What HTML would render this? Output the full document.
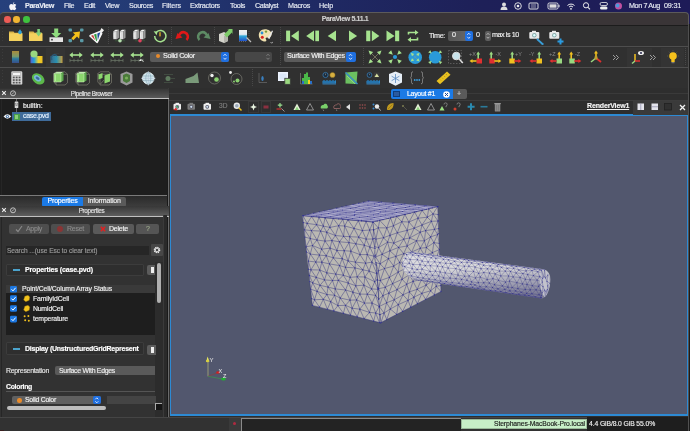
<!DOCTYPE html>
<html><head><meta charset="utf-8">
<style>
*{margin:0;padding:0;box-sizing:border-box}
html,body{width:690px;height:431px;overflow:hidden;background:#2e2e2e;font-family:"Liberation Sans",sans-serif;position:relative}
.a{position:absolute}
div.a,div.mt{-webkit-text-stroke:0.15px currentColor;will-change:transform}
.mt{position:absolute;top:1px;font-size:7.2px;line-height:10px;color:#e8ecf4;white-space:nowrap}
</style></head><body>
<!-- menubar -->
<div class="a" style="left:0;top:0;width:690px;height:26px;background:linear-gradient(90deg,#26407c 0%,#233a74 20%,#1f2a64 45%,#1e2058 70%,#1e1b58 100%)"></div>
<svg class="a" style="left:8.5px;top:2px" width="8" height="9" viewBox="0 0 8 9"><path d="M5.3 0.3c0.1 0.8-0.5 1.6-1.3 1.7-0.1-0.8 0.5-1.6 1.3-1.7zM7.3 6.3c-0.4 0.9-1 1.9-1.8 1.9-0.7 0-0.9-0.4-1.7-0.4s-1 0.4-1.7 0.4C1.3 8.2 0.2 6.3 0.2 4.6c0-1.6 1-2.5 2-2.5 0.7 0 1.2 0.4 1.6 0.4s1-0.5 1.8-0.4c0.3 0 1.2 0.1 1.7 0.9-1.4 0.9-1.2 2.8 0 3.3z" fill="#f4f4f8"/></svg>
<div class="mt" style="left:25px;font-weight:bold;letter-spacing:-0.36px">ParaView</div>
<div class="mt" style="left:64px;letter-spacing:-0.40px">File</div>
<div class="mt" style="left:84px;letter-spacing:-0.35px">Edit</div>
<div class="mt" style="left:105px;letter-spacing:-0.36px">View</div>
<div class="mt" style="left:129px;letter-spacing:-0.33px">Sources</div>
<div class="mt" style="left:162px;letter-spacing:-0.08px">Filters</div>
<div class="mt" style="left:190px;letter-spacing:-0.24px">Extractors</div>
<div class="mt" style="left:230px;letter-spacing:-0.36px">Tools</div>
<div class="mt" style="left:255px;letter-spacing:-0.37px">Catalyst</div>
<div class="mt" style="left:288px;letter-spacing:-0.26px">Macros</div>
<div class="mt" style="left:319px;letter-spacing:-0.20px">Help</div>
<svg class="a" style="left:498px;top:1px" width="125" height="10" viewBox="0 0 125 10">
 <circle cx="6" cy="3.5" r="2" fill="#ddd"/><path d="M2.5 9c0-2.5 1.5-3.5 3.5-3.5s3.5 1 3.5 3.5z" fill="#ddd"/>
 <circle cx="20" cy="5" r="3.3" fill="none" stroke="#eee" stroke-width="0.9"/><circle cx="20" cy="5" r="1.3" fill="#eee"/>
 <rect x="31" y="2" width="9" height="6" rx="1" fill="none" stroke="#eee" stroke-width="0.9"/><path d="M33 4h5M33 6h5" stroke="#eee" stroke-width="0.6"/>
 <rect x="50" y="2" width="10" height="6" rx="1.3" fill="none" stroke="#eee" stroke-width="0.9"/><rect x="51.5" y="3.3" width="7" height="3.4" fill="#ddd"/><rect x="60.5" y="3.8" width="1" height="2.4" fill="#eee"/>
 <path d="M69.5 4.5a5 5 0 0 1 7 0M71 6a2.8 2.8 0 0 1 4 0" fill="none" stroke="#f0f0f0" stroke-width="1"/><circle cx="73" cy="7.8" r="0.9" fill="#f0f0f0"/>
 <circle cx="88" cy="4.3" r="2.6" fill="none" stroke="#eee" stroke-width="1"/><path d="M90 6.3l2 2" stroke="#eee" stroke-width="1.1"/>
 <rect x="102" y="1.5" width="7.5" height="3" rx="1.5" fill="none" stroke="#eee" stroke-width="0.8"/><rect x="102" y="5.5" width="7.5" height="3" rx="1.5" fill="#eee"/>
 <circle cx="120.5" cy="5" r="3.5" fill="#c050a0"/><circle cx="119.5" cy="4.5" r="2" fill="#40a0e0" opacity="0.9"/>
</svg>
<div class="mt" style="left:629px;letter-spacing:-0.38px">Mon 7 Aug</div>
<div class="mt" style="left:664px;letter-spacing:-0.20px">09:31</div>

<!-- title bar -->
<div class="a" style="left:0;top:12px;width:689px;height:13px;background:#3a3537;border-top:1px solid #5c5a5b;border-right:1px solid #5c5a5b;border-radius:4px 4px 0 0"></div>
<div class="a" style="left:3.5px;top:15.5px;width:6.5px;height:6.5px;border-radius:50%;background:#ee5c56"></div>
<div class="a" style="left:13px;top:15.5px;width:6.5px;height:6.5px;border-radius:50%;background:#f2b532"></div>
<div class="a" style="left:22.5px;top:15.5px;width:6.5px;height:6.5px;border-radius:50%;background:#3fc23f"></div>
<div class="a" style="left:0;top:13.5px;width:690px;text-align:center;font-size:7px;line-height:10px;color:#d0d0d0;font-weight:bold;letter-spacing:-0.36px">ParaView 5.11.1</div>
<div class="a" style="left:0;top:25px;width:690px;height:1px;background:#1c1c1c"></div>

<!-- toolbars -->
<div class="a" style="left:0;top:26px;width:690px;height:62px;background:#303030"></div>
<div class="a" style="left:0;top:45.5px;width:690px;height:1px;background:#4e4e4e"></div>
<div class="a" style="left:0;top:66.5px;width:690px;height:1px;background:#4e4e4e"></div>
<div class="a" style="left:0;top:88px;width:690px;height:1px;background:#3a3a3a"></div>


<!-- left panel -->
<div class="a" style="left:0;top:88px;width:168px;height:329px;background:#323232"></div>
<div class="a" style="left:0;top:88.5px;width:168.5px;height:9.5px;background:linear-gradient(#383838,#4a4a4a 50%,#5e5e5e)"></div>
<div class="a" style="left:0;top:98px;width:168.5px;height:1px;background:#c0c0c0"></div>
<svg class="a" style="left:1px;top:90px" width="16" height="7" viewBox="0 0 16 7"><path d="M1.2 1.2l3.6 3.6M4.8 1.2L1.2 4.8" stroke="#eee" stroke-width="1.1"/><circle cx="12" cy="3.3" r="2.5" fill="none" stroke="#ddd" stroke-width="0.8"/><path d="M11 4.3l2-2" stroke="#ddd" stroke-width="0.7"/></svg>
<div class="a" style="left:0;top:89.5px;width:183px;text-align:center;font-size:6.3px;line-height:8px;color:#e4e4e4;letter-spacing:-0.37px">Pipeline Browser</div>
<div class="a" style="left:0;top:99px;width:167px;height:96px;background:#1e1e1e"></div>
<div class="a" style="left:167px;top:99px;width:1px;height:318px;background:#1a1a1a"></div>
<div class="a" style="left:0.5px;top:99px;width:1px;height:318px;background:#262626"></div>
<div class="a" style="left:168px;top:99px;width:1px;height:318px;background:#6a6a6a"></div>
<!-- pipeline items -->
<svg class="a" style="left:13px;top:99px" width="8" height="22" viewBox="0 0 8 22"><path d="M3.5 0v2.5M3.5 9v4" stroke="#bbb" stroke-width="0.5"/><rect x="1.7" y="2.5" width="3.6" height="6.5" rx="0.6" fill="#d8d8d8"/><path d="M2.7 4v1.6M4.3 4v1.6M2.5 6.3h2" stroke="#333" stroke-width="0.5"/></svg>
<div class="a" style="left:22.5px;top:101px;font-size:7px;line-height:9px;color:#f0f0f0;letter-spacing:-0.09px">builtin:</div>
<div class="a" style="left:12px;top:112px;width:39px;height:8.7px;background:#3f6b9a"></div>
<svg class="a" style="left:2.5px;top:113px" width="9" height="7" viewBox="0 0 9 7"><path d="M0.5 3.5Q4.3-0.8 8.3 3.5Q4.3 7.8 0.5 3.5z" fill="#f4f4f4"/><circle cx="4.4" cy="3.5" r="1.6" fill="#3a6aa0"/><circle cx="4.4" cy="3.5" r="0.7" fill="#fff"/></svg>
<div class="a" style="left:13.5px;top:113.5px;width:6px;height:5.5px;background:#4aa04a"></div>
<div class="a" style="left:15px;top:114.5px;width:3px;height:3.5px;background:#8ad07a"></div>
<div class="a" style="left:22.5px;top:111.3px;font-size:7px;line-height:9px;color:#e6f2ff;letter-spacing:-0.32px">case.pvd</div>

<!-- tabs -->
<div class="a" style="left:0;top:195px;width:167px;height:1px;background:#7a7a7a"></div>
<div class="a" style="left:0;top:196px;width:167px;height:10px;background:linear-gradient(#2a2a2a,#3c3c3c)"></div>
<div class="a" style="left:42px;top:196.5px;width:41px;height:9.5px;background:#1b7ae6;border-radius:2px 0 0 2px"></div>
<div class="a" style="left:42px;top:196.3px;width:41px;text-align:center;font-size:7px;line-height:10px;color:#fff;letter-spacing:-0.2px">Properties</div>
<div class="a" style="left:83px;top:196.5px;width:42.5px;height:9.5px;background:#5a5a5a;border-radius:0 2px 2px 0"></div>
<div class="a" style="left:83px;top:196.3px;width:42.5px;text-align:center;font-size:7px;line-height:10px;color:#eee;letter-spacing:-0.18px">Information</div>
<div class="a" style="left:0;top:206px;width:168.5px;height:9.5px;background:linear-gradient(#383838,#4a4a4a 50%,#5e5e5e)"></div>
<div class="a" style="left:0;top:215.5px;width:168.5px;height:1px;background:#c0c0c0"></div>
<svg class="a" style="left:1px;top:207px" width="16" height="7" viewBox="0 0 16 7"><path d="M1.2 1.2l3.6 3.6M4.8 1.2L1.2 4.8" stroke="#eee" stroke-width="1.1"/><circle cx="12" cy="3.3" r="2.5" fill="none" stroke="#ddd" stroke-width="0.8"/><path d="M11 4.3l2-2" stroke="#ddd" stroke-width="0.7"/></svg>
<div class="a" style="left:0;top:206.5px;width:183px;text-align:center;font-size:6.3px;line-height:8px;color:#e4e4e4;letter-spacing:-0.3px">Properties</div>

<!-- buttons -->
<div class="a" style="left:9px;top:224.3px;width:39.5px;height:9.5px;background:#4e4e4e;border-radius:2px"></div>
<svg class="a" style="left:15px;top:225px" width="8" height="8" viewBox="0 0 8 8"><path d="M1 4.5l2 2 4-5.5" fill="none" stroke="#888" stroke-width="1.2"/></svg>
<div class="a" style="left:26px;top:224.3px;font-size:7px;line-height:10px;color:#8a8a8a;letter-spacing:-0.30px">Apply</div>
<div class="a" style="left:51px;top:224.3px;width:39px;height:9.5px;background:#4e4e4e;border-radius:2px"></div>
<div class="a" style="left:57px;top:226px;width:6px;height:6px;border-radius:50%;background:#8a3434"></div>
<div class="a" style="left:67px;top:224.3px;font-size:7px;line-height:10px;color:#8a8a8a;letter-spacing:-0.26px">Reset</div>
<div class="a" style="left:93px;top:224.3px;width:40.5px;height:9.5px;background:#5a5a5a;border-radius:2px"></div>
<svg class="a" style="left:99.5px;top:226px" width="6" height="6" viewBox="0 0 6 6"><path d="M0.8 0.8l4.4 4.4M5.2 0.8L0.8 5.2" stroke="#e02020" stroke-width="1.5"/></svg>
<div class="a" style="left:109px;top:224.3px;font-size:7px;line-height:10px;color:#f4f4f4;letter-spacing:-0.21px">Delete</div>
<div class="a" style="left:136px;top:224.3px;width:23px;height:9.5px;background:#555;border-radius:2px"></div>
<div class="a" style="left:145.5px;top:224.3px;font-size:7px;line-height:10px;color:#9aa88a">?</div>

<!-- search -->
<div class="a" style="left:6px;top:246px;width:143px;height:8.5px;background:#262626"></div>
<div class="a" style="left:7px;top:245.5px;font-size:6.6px;line-height:9px;color:#9a9a9a;letter-spacing:-0.05px">Search ...(use Esc to clear text)</div>
<div class="a" style="left:150.5px;top:244.3px;width:12px;height:12px;background:#474747;border-radius:1px"></div>
<svg class="a" style="left:152.5px;top:246.3px" width="8" height="8" viewBox="0 0 8 8"><circle cx="4" cy="4" r="2.5" fill="none" stroke="#eee" stroke-width="1.6" stroke-dasharray="1.2 0.76"/><circle cx="4" cy="4" r="1.9" fill="none" stroke="#eee" stroke-width="0.9"/></svg>

<!-- properties group -->
<div class="a" style="left:6px;top:264px;width:138px;height:11.5px;background:#2e2e2e;border:1px solid #3c3c3c;border-radius:1px"></div>
<div class="a" style="left:12.5px;top:269.3px;width:6.5px;height:1.5px;background:#4ba3cc"></div>
<div class="a" style="left:24.5px;top:265px;font-size:7px;line-height:10px;color:#fff;font-weight:bold;letter-spacing:-0.16px">Properties (case.pvd)</div>
<div class="a" style="left:146.5px;top:265px;width:9px;height:10px;background:#5c5c5c;border-radius:2px 0 0 2px"></div>
<div class="a" style="left:150.5px;top:267px;width:3px;height:6px;background:#eee"></div>
<div class="a" style="left:155px;top:262px;width:8px;height:155px;background:#2c2c2c"></div>
<div class="a" style="left:157px;top:262.5px;width:4px;height:40px;background:#b0b0b0;border-radius:2px"></div>
<div class="a" style="left:163px;top:215px;width:1px;height:202px;background:#3a3a3a"></div>
<div class="a" style="left:164px;top:215px;width:3px;height:202px;background:#2a2a2a"></div>

<!-- list -->
<div class="a" style="left:6px;top:284.5px;width:149px;height:8.5px;background:#3a3a3a"></div>
<div class="a" style="left:6px;top:293px;width:149px;height:42px;background:#1e1e1e"></div>
<div class="a" style="left:22px;top:283.8px;font-size:6.9px;line-height:10px;color:#f0f0f0;letter-spacing:-0.15px">Point/Cell/Column Array Status</div>
<svg class="a" style="left:9.5px;top:285.5px" width="8" height="38" viewBox="0 0 8 38">
<g fill="#1d78e2"><rect x="0" y="0" width="7" height="6.6" rx="1.3"/><rect x="0" y="9.3" width="7" height="6.6" rx="1.3"/><rect x="0" y="19.2" width="7" height="6.6" rx="1.3"/><rect x="0" y="29.8" width="7" height="6.6" rx="1.3"/></g>
<g fill="none" stroke="#fff" stroke-width="1"><path d="M1.5 3.3l1.5 1.6 2.6-3.1"/><path d="M1.5 12.6l1.5 1.6 2.6-3.1"/><path d="M1.5 22.5l1.5 1.6 2.6-3.1"/><path d="M1.5 33.1l1.5 1.6 2.6-3.1"/></g>
</svg>
<svg class="a" style="left:23px;top:294.5px" width="8" height="28" viewBox="0 0 8 28">
<path d="M1.8 1.2L5 0.3 6.8 2 6.2 5.3 2.8 6.7 0.6 5z" fill="#f2c31c" stroke="#8a6a10" stroke-width="0.4"/>
<path d="M1.8 11.2L5 10.3 6.8 12 6.2 15.3 2.8 16.7 0.6 15z" fill="#f2c31c" stroke="#8a6a10" stroke-width="0.4"/>
<g fill="#f0c020"><circle cx="1.6" cy="21.3" r="1"/><circle cx="5.4" cy="21.1" r="1"/><circle cx="2.2" cy="25.3" r="1"/><circle cx="5.8" cy="25.8" r="1"/></g>
</svg>
<div class="a" style="left:33px;top:293.5px;font-size:6.9px;line-height:10px;color:#f0f0f0;letter-spacing:-0.16px">FamilyIdCell</div>
<div class="a" style="left:33px;top:303.5px;font-size:6.9px;line-height:10px;color:#f0f0f0;letter-spacing:-0.24px">NumIdCell</div>
<div class="a" style="left:33px;top:314px;font-size:6.9px;line-height:10px;color:#f0f0f0;letter-spacing:-0.20px">temperature</div>

<!-- display group -->
<div class="a" style="left:6px;top:342px;width:138px;height:12.5px;background:#2e2e2e;border:1px solid #3c3c3c;border-radius:1px"></div>
<div class="a" style="left:12.5px;top:347.5px;width:6.5px;height:1.5px;background:#4ba3cc"></div>
<div class="a" style="left:24.5px;top:343.5px;font-size:7px;line-height:10px;color:#fff;font-weight:bold;letter-spacing:-0.24px">Display (UnstructuredGridRepresent</div>
<div class="a" style="left:146.5px;top:345px;width:9px;height:9.5px;background:#5c5c5c;border-radius:2px 0 0 2px"></div>
<div class="a" style="left:151px;top:347px;width:3px;height:5.5px;background:#eee"></div>
<div class="a" style="left:6px;top:366.3px;font-size:6.9px;line-height:10px;color:#e6e6e6;letter-spacing:-0.27px">Representation</div>
<div class="a" style="left:55px;top:366.3px;width:100px;height:8.5px;background:#5a5a5a;border-radius:2px 0 0 2px"></div>
<div class="a" style="left:59px;top:365.5px;font-size:6.9px;line-height:10px;color:#eee;letter-spacing:-0.27px">Surface With Edges</div>
<div class="a" style="left:6px;top:381.5px;font-size:6.9px;line-height:10px;color:#fff;font-weight:bold;letter-spacing:-0.29px">Coloring</div>
<div class="a" style="left:6px;top:390.5px;width:149px;height:1px;background:#555"></div>
<div class="a" style="left:11.7px;top:396px;width:89px;height:8.3px;background:#606060;border-radius:2px"></div>
<div class="a" style="left:17.3px;top:397.8px;width:4.6px;height:4.6px;border-radius:50%;background:#e88a2a"></div>
<div class="a" style="left:25px;top:395px;font-size:6.9px;line-height:10px;color:#f2f2f2;letter-spacing:-0.25px">Solid Color</div>
<div class="a" style="left:93px;top:396px;width:7.5px;height:8.3px;background:#1f6fe0;border-radius:2px"></div>
<svg class="a" style="left:93px;top:396px" width="8" height="9" viewBox="0 0 8 9"><path d="M2.3 3.3l1.5-1.5 1.5 1.5M2.3 5.3l1.5 1.5 1.5-1.5" fill="none" stroke="#fff" stroke-width="0.8"/></svg>
<div class="a" style="left:106.6px;top:396px;width:48.5px;height:8.3px;background:#444"></div>
<div class="a" style="left:6.8px;top:406px;width:98.5px;height:4.2px;background:#bdbdbd;border-radius:2px"></div>
<div class="a" style="left:155.2px;top:403.4px;width:7.4px;height:7.4px;background:#151515;border-top:1px solid #aaa;border-left:1px solid #aaa"></div>
<div class="a" style="left:0;top:416.5px;width:168px;height:1px;background:#474747"></div>

<!-- right area -->
<div class="a" style="left:169px;top:88px;width:521px;height:329px;background:#2e2e2e"></div>
<div class="a" style="left:169px;top:92.5px;width:521px;height:1px;background:#3a3a3a"></div>
<div class="a" style="left:169px;top:99.5px;width:521px;height:1px;background:#3c3c3c"></div>
<div class="a" style="left:391px;top:89px;width:61.5px;height:9.5px;background:#1b7ae6;border-radius:2px 0 0 2px"></div>
<div class="a" style="left:392.5px;top:90.8px;width:6.5px;height:6px;background:#2a5aa0;border:0.8px solid #0d3d80"></div>
<div class="a" style="left:407px;top:88.8px;font-size:7px;line-height:10px;color:#fff;letter-spacing:-0.31px">Layout #1</div>
<svg class="a" style="left:442.5px;top:90.5px" width="7" height="7" viewBox="0 0 7 7"><circle cx="3.5" cy="3.5" r="3.3" fill="#fff"/><path d="M2 2l3 3M5 2L2 5" stroke="#1b4a9a" stroke-width="1"/></svg>
<div class="a" style="left:452.5px;top:89px;width:13.5px;height:9.5px;background:#5a5a5a;border-radius:0 2px 2px 0"></div>
<div class="a" style="left:457px;top:88.5px;font-size:7px;line-height:10px;color:#ccc">+</div>
<div class="a" style="left:170px;top:114px;width:518px;height:302px;background:#52576e;border-top:2px solid #2d8ad4;border-left:1.5px solid #2d8ad4;border-right:1.5px solid #2d8ad4;border-bottom:2px solid #2d8ad4"></div>

<svg class="a" style="left:9px;top:29px" width="15" height="13" viewBox="0 0 15 13"><path d="M0 2.5h4.5l1 1.3H13V12H0z" fill="#d9b54a"/><rect x="0" y="4.3" width="13.5" height="7.7" fill="#f4d25e"/><path d="M11 0.3l-2 3h4z" fill="#2f9fd6"/><circle cx="11" cy="3.5" r="1.7" fill="#2f9fd6"/></svg>
<svg class="a" style="left:29px;top:29px" width="15" height="13" viewBox="0 0 15 13"><path d="M0 2.5h4.5l1 1.3H13V12H0z" fill="#d9b54a"/><rect x="0" y="4.3" width="13.5" height="7.7" fill="#f4d25e"/><rect x="8.3" y="0" width="2.6" height="4" fill="#7cd07a"/><path d="M6.6 3.6h6l-3 4z" fill="#7cd07a"/></svg>
<svg class="a" style="left:49px;top:28px" width="15" height="15" viewBox="0 0 15 15"><rect x="0.5" y="9.3" width="13.5" height="4.7" fill="#e4e4e4"/><circle cx="3" cy="11.7" r="0.9" fill="#333"/><rect x="5.2" y="0.5" width="4" height="5" fill="#8fdc7e"/><path d="M2.2 5h10l-5 5z" fill="#8fdc7e"/></svg>
<svg class="a" style="left:68px;top:28px" width="16" height="15" viewBox="0 0 16 15"><g fill="#5a9aa6"><rect x="0.5" y="0.5" width="3.5" height="3" rx="1"/><rect x="12" y="0.5" width="3.5" height="3" rx="1"/><rect x="0.5" y="11" width="3.5" height="3.2" rx="1"/><rect x="12" y="11" width="3.5" height="3.2" rx="1"/></g><path d="M12 3.5L4.8 4.5 7 6.6 3.3 10.3 5.3 12.3 9 8.6 11.1 10.7z" fill="#f4c01a"/></svg>
<svg class="a" style="left:88px;top:27px" width="17" height="17" viewBox="0 0 17 17"><path d="M1.2 9.3Q1 7.8 2.5 7.4L12.5 3.6 14.5 6.5 10 15.5Q9.3 16.6 8.3 15.8z" fill="#f6f6f6"/><path d="M12 4l1.5-3 2.5 2.3-2.3 2.6z" fill="#f0f0f0"/><path d="M3 8.8L5.2 8 7.2 13.2z" fill="#c83a3a"/><path d="M6 7.6L8.4 6.7 9 13.8 8.3 14.2z" fill="#2c9a3c"/><path d="M9.3 6.4L12.3 5.2 9.8 13.3z" fill="#1e4a9a"/></svg>
<svg class="a" style="left:113px;top:29px" width="14" height="14" viewBox="0 0 14 14"><path d="M0.3 2.2l2.2-1.5h3.5l-2.2 1.5z" fill="#f4f4f4"/><path d="M0.3 2.2h3.5v8h-3.5z" fill="#dcdcdc"/><path d="M3.8 2.2l2.2-1.5v8l-2.2 1.5z" fill="#9c9c9c"/><path d="M1.1 4v4.5" stroke="#f8f8f8" stroke-width="0.6"/><path d="M6.8 2.2l2.2-1.5h3.5l-2.2 1.5z" fill="#f4f4f4"/><path d="M6.8 2.2h3.5v8h-3.5z" fill="#dcdcdc"/><path d="M10.3 2.2l2.2-1.5v8l-2.2 1.5z" fill="#9c9c9c"/><path d="M7.6 4v4.5" stroke="#f8f8f8" stroke-width="0.6"/><path d="M2 11.8h10" stroke="#3a5a3a" stroke-width="0.8"/><circle cx="7" cy="11.8" r="1.8" fill="#b8e0b0"/></svg>
<svg class="a" style="left:133px;top:29px" width="14" height="14" viewBox="0 0 14 14"><path d="M0.3 2.2l2.2-1.5h3.5l-2.2 1.5z" fill="#f4f4f4"/><path d="M0.3 2.2h3.5v8h-3.5z" fill="#dcdcdc"/><path d="M3.8 2.2l2.2-1.5v8l-2.2 1.5z" fill="#9c9c9c"/><path d="M1.1 4v4.5" stroke="#f8f8f8" stroke-width="0.6"/><path d="M6.8 2.2l2.2-1.5h3.5l-2.2 1.5z" fill="#f4f4f4"/><path d="M6.8 2.2h3.5v8h-3.5z" fill="#dcdcdc"/><path d="M10.3 2.2l2.2-1.5v8l-2.2 1.5z" fill="#9c9c9c"/><path d="M7.6 4v4.5" stroke="#f8f8f8" stroke-width="0.6"/><path d="M2 11.8h10" stroke="#3a5a3a" stroke-width="0.8"/><circle cx="7" cy="11.8" r="1.8" fill="#e04060"/></svg>
<svg class="a" style="left:153px;top:29px" width="14" height="14" viewBox="0 0 14 14"><path d="M3.5 3.0A5.6 5.6 0 1 1 1.7 7" fill="none" stroke="#a6e28f" stroke-width="1.5"/><path d="M0.6 2.2l4 0.4-1 3.6z" fill="#a6e28f"/><rect x="6.4" y="3.2" width="1.2" height="4.2" fill="#f0c020"/></svg>
<svg class="a" style="left:175px;top:30px" width="15" height="12" viewBox="0 0 15 12"><path d="M4 7.5A4.5 4.5 0 1 1 11.5 10" fill="none" stroke="#e01818" stroke-width="2.6"/><path d="M0.5 9l2-6 5 4.5z" fill="#e01818"/></svg>
<svg class="a" style="left:196px;top:30px" width="15" height="12" viewBox="0 0 15 12"><path d="M11 7.5A4.5 4.5 0 1 0 3.5 10" fill="none" stroke="#5d8a64" stroke-width="2.6"/><path d="M14.5 9l-2-6-5 4.5z" fill="#5d8a64"/></svg>
<svg class="a" style="left:218px;top:28px" width="15" height="16" viewBox="0 0 15 16"><path d="M1 6l5-2 4 2v7l-4 2-5-2z" fill="#d4d4cc"/><path d="M6 8l4-2v7l-4 2z" fill="#b4b4ac"/><path d="M6 6.5l5-5-2-0.5h5.5v5.5l-0.6-2-5 5z" fill="#7ecb6a"/></svg>
<svg class="a" style="left:238px;top:29px" width="15" height="14" viewBox="0 0 15 14"><defs><linearGradient id="cmg" x1="0" y1="0" x2="0" y2="1"><stop offset="0" stop-color="#f0f0f0"/><stop offset="0.4" stop-color="#e0e8f0"/><stop offset="0.55" stop-color="#30a8d8"/><stop offset="1" stop-color="#2050c8"/></linearGradient></defs><rect x="1" y="1" width="8" height="11" fill="url(#cmg)"/><path d="M1 12.5h8" stroke="#888" stroke-width="0.6" stroke-dasharray="1 1"/><path d="M8.5 8.5l4.5 4.5" stroke="#bbb" stroke-width="1.3"/><path d="M11 2v8" stroke="#666" stroke-width="0.6" stroke-dasharray="1 1"/></svg>
<svg class="a" style="left:258px;top:28px" width="16" height="16" viewBox="0 0 16 16"><path d="M7 1.2C3 1.2 0.8 4 0.8 7.3c0 3.6 3 6.3 6.3 6.3 1.6 0 1.5-1.5 0.8-2.3-0.7-0.8 0-1.8 1-1.8h1.5c2 0 3.2-1.3 3.2-3.2C13.6 3.4 10.8 1.2 7 1.2z" fill="#f0e2b0"/><circle cx="4" cy="5" r="1.4" fill="#2a8fd8"/><circle cx="8" cy="3.6" r="1.2" fill="#7a9a3a"/><circle cx="4.3" cy="9.3" r="1.5" fill="#d82020"/><path d="M9.5 10l4.5-7.5 1 0.5-3.5 8z" fill="#e8e8e8"/><path d="M12.5 14l1.2 1.2 1.2-1.2" fill="none" stroke="#ccc" stroke-width="0.8"/></svg>
<svg class="a" style="left:285px;top:30px" width="135" height="12" viewBox="0 0 135 12"><g fill="#a6e28f"><rect x="1.1" y="0.6" width="4" height="10.6"/><path d="M6 5.9L13.8 0.6V11.2z"/><path d="M21.2 5.9L29 0.6V11.2z"/><rect x="30.3" y="0.6" width="3.7" height="10.6"/><path d="M42.7 5.9L51 0.6V11.2z"/><path d="M64 0.6L72.1 5.9 64 11.2z"/><rect x="81.2" y="0.6" width="4.1" height="10.6"/><path d="M86.8 0.6L94.4 5.9 86.8 11.2z"/><path d="M101.5 0.6L109.6 5.9 101.5 11.2z"/><rect x="110.1" y="0.6" width="4.1" height="10.6"/></g><g fill="none" stroke="#a6e28f" stroke-width="1.6"><path d="M123.5 4.5V2.5h8"/><path d="M132.5 7.5v2.2h-8"/></g><path d="M130 0l3.5 2.5-3.5 2.5z" fill="#a6e28f"/><path d="M126 7l-3.5 2.7 3.5 2.5z" fill="#a6e28f"/></svg>
<div class="a" style="left:429.3px;top:30.5px;font-size:7.2px;line-height:9.2px;color:#f0f0f0;white-space:nowrap;letter-spacing:-0.34px">Time:</div>
<div class="a" style="left:448px;top:30.5px;width:24px;height:9.5px;border-radius:2px;background:linear-gradient(90deg,#565656,#6a6a6a);"></div>
<div class="a" style="left:451.5px;top:30.2px;font-size:7.2px;line-height:9.2px;color:#f0f0f0;white-space:nowrap;">0</div>
<div class="a" style="left:464.5px;top:30.5px;width:7.5px;height:9.5px;border-radius:2px;background:#1f6fe0"></div>
<svg class="a" style="left:464.5px;top:30.5px" width="8" height="10" viewBox="0 0 8 10"><path d="M2.3 3.8l1.5-1.6 1.5 1.6M2.3 5.8l1.5 1.6 1.5-1.6" fill="none" stroke="#fff" stroke-width="0.8"/></svg>
<div class="a" style="left:476.3px;top:30.2px;font-size:7.2px;line-height:9.2px;color:#f0f0f0;white-space:nowrap;">0</div>
<div class="a" style="left:485px;top:30.5px;width:6px;height:9.5px;border-radius:2px;background:#5e5e5e"></div>
<svg class="a" style="left:485px;top:30.5px" width="6" height="10" viewBox="0 0 6 10"><path d="M1.6 3.8l1.4-1.5 1.4 1.5M1.6 5.8l1.4 1.5 1.4-1.5" fill="none" stroke="#ddd" stroke-width="0.7"/></svg>
<div class="a" style="left:492.3px;top:30.2px;font-size:7.2px;line-height:9.2px;color:#f0f0f0;white-space:nowrap;letter-spacing:-0.44px">max is 10</div>
<svg class="a" style="left:528.5px;top:29.5px" width="16" height="16" viewBox="0 0 16 16"><rect x="0.3" y="2" width="10" height="6.8" rx="1" fill="#e8e8e8"/><rect x="3" y="0.8" width="4" height="2" fill="#e8e8e8"/><circle cx="5.3" cy="5.3" r="2.2" fill="#8aa"/><circle cx="5.3" cy="5.3" r="1.2" fill="#dff"/><path d="M8 9l5.5 5" stroke="#3a9ed8" stroke-width="1.8"/><circle cx="13.7" cy="14" r="1" fill="#3a9ed8"/></svg>
<svg class="a" style="left:549px;top:29.5px" width="16" height="16" viewBox="0 0 16 16"><rect x="0.3" y="2" width="10" height="6.8" rx="1" fill="#e8e8e8"/><rect x="3" y="0.8" width="4" height="2" fill="#e8e8e8"/><circle cx="5.3" cy="5.3" r="2.2" fill="#8aa"/><circle cx="5.3" cy="5.3" r="1.2" fill="#dff"/><path d="M11.5 8.5v6M8.5 11.5h6" stroke="#2a9be0" stroke-width="2"/></svg>
<svg class="a" style="left:12px;top:50.5px" width="8" height="13" viewBox="0 0 8 13"><defs><linearGradient id="cb1" x1="0" y1="0" x2="0" y2="1"><stop offset="0" stop-color="#a88a3a"/><stop offset="0.45" stop-color="#7a9a6a"/><stop offset="0.65" stop-color="#2a7aa0"/><stop offset="1" stop-color="#3a4e8a"/></linearGradient></defs><rect x="0" y="0" width="7" height="12" fill="url(#cb1)"/></svg>
<svg class="a" style="left:29.5px;top:49.5px" width="13" height="14" viewBox="0 0 13 14"><defs><linearGradient id="cb2" x1="0" y1="0" x2="1" y2="0"><stop offset="0" stop-color="#5a60c8"/><stop offset="0.3" stop-color="#20a0e0"/><stop offset="0.65" stop-color="#e8d030"/><stop offset="1" stop-color="#f0c020"/></linearGradient></defs><rect x="0.5" y="6" width="12" height="7.2" fill="url(#cb2)"/><circle cx="4" cy="4" r="3.6" fill="#9ad880"/></svg>
<div class="a" style="left:46px;top:47.5px;width:19px;height:19px;background:#343434"></div>
<svg class="a" style="left:49.5px;top:50px" width="13" height="14" viewBox="0 0 13 14"><defs><linearGradient id="cb3" x1="0" y1="0" x2="1" y2="0"><stop offset="0" stop-color="#3a6a8a"/><stop offset="0.5" stop-color="#2a90b0"/><stop offset="1" stop-color="#c8a040"/></linearGradient></defs><rect x="0.5" y="6" width="12" height="7" fill="url(#cb3)"/><path d="M2 10a3 3 0 0 1 5-4" fill="none" stroke="#2a5a7a" stroke-width="1.5"/><path d="M4 3.5h5" stroke="#3a3a3a" stroke-width="1"/></svg>
<svg class="a" style="left:69.3px;top:51.5px" width="15" height="12" viewBox="0 0 15 12"><path d="M2.5 3h9" stroke="#a6e28f" stroke-width="1.6"/><path d="M0.3 3l3.5-2.7v5.4zM13.7 3l-3.5-2.7v5.4z" fill="#a6e28f"/><path d="M1 8.5h12M1 6.8v3.4M5 6.8v3.4M9 6.8v3.4M13 6.8v3.4" stroke="#6e7a6a" stroke-width="0.7"/></svg>
<svg class="a" style="left:89.6px;top:51.5px" width="15" height="12" viewBox="0 0 15 12"><path d="M2.5 3h9" stroke="#a6e28f" stroke-width="1.6"/><path d="M0.3 3l3.5-2.7v5.4zM13.7 3l-3.5-2.7v5.4z" fill="#a6e28f"/><path d="M1 8.5h12M1 6.8v3.4M5 6.8v3.4M9 6.8v3.4M13 6.8v3.4" stroke="#6e7a6a" stroke-width="0.7"/></svg>
<svg class="a" style="left:110px;top:51.5px" width="15" height="12" viewBox="0 0 15 12"><path d="M2.5 3h9" stroke="#a6e28f" stroke-width="1.6"/><path d="M0.3 3l3.5-2.7v5.4zM13.7 3l-3.5-2.7v5.4z" fill="#a6e28f"/><path d="M1 8.5h12M1 6.8v3.4M5 6.8v3.4M9 6.8v3.4M13 6.8v3.4" stroke="#6e7a6a" stroke-width="0.7"/></svg>
<svg class="a" style="left:129.7px;top:51.5px" width="15" height="12" viewBox="0 0 15 12"><path d="M2.5 3h9" stroke="#a6e28f" stroke-width="1.6"/><path d="M0.3 3l3.5-2.7v5.4zM13.7 3l-3.5-2.7v5.4z" fill="#a6e28f"/><path d="M1 8.5h12M1 6.8v3.4M5 6.8v3.4M9 6.8v3.4M13 6.8v3.4" stroke="#6e7a6a" stroke-width="0.7"/></svg>
<svg class="a" style="left:138px;top:57px" width="6" height="6" viewBox="0 0 6 6"><path d="M1 4l2-2.5 0.5 2.5z" fill="#f0f0f0"/><path d="M3.5 2l2 3" stroke="#ddd" stroke-width="0.7"/></svg>
<div class="a" style="left:149.5px;top:51.5px;width:79px;height:9.5px;border-radius:2px;background:#5b5b5b"></div>
<div class="a" style="left:155.7px;top:54px;width:4.2px;height:4.2px;border-radius:50%;background:#e88a2a"></div>
<div class="a" style="left:162.5px;top:51.2px;font-size:7.2px;line-height:9.2px;color:#f2f2f2;white-space:nowrap;letter-spacing:-0.3px">Solid Color</div>
<div class="a" style="left:220.5px;top:51.5px;width:8px;height:9.5px;border-radius:2px;background:#1f6fe0"></div>
<svg class="a" style="left:220.5px;top:51.5px" width="8" height="10" viewBox="0 0 8 10"><path d="M2.5 3.8l1.5-1.6 1.5 1.6M2.5 5.8l1.5 1.6 1.5-1.6" fill="none" stroke="#fff" stroke-width="0.8"/></svg>
<div class="a" style="left:234.5px;top:51.5px;width:37px;height:9.5px;border-radius:2px;background:#474747"></div>
<svg class="a" style="left:264px;top:51.5px" width="8" height="10" viewBox="0 0 8 10"><path d="M2.5 3.8l1.5-1.6 1.5 1.6M2.5 5.8l1.5 1.6 1.5-1.6" fill="none" stroke="#8a8a8a" stroke-width="0.8"/></svg>
<div class="a" style="left:284px;top:51.5px;width:71px;height:9.5px;border-radius:2px;background:#5b5b5b"></div>
<div class="a" style="left:287px;top:51.2px;font-size:7.2px;line-height:9.2px;color:#f2f2f2;white-space:nowrap;letter-spacing:-0.32px">Surface With Edges</div>
<div class="a" style="left:345.5px;top:51.5px;width:9.5px;height:9.5px;border-radius:2px;background:#1f6fe0"></div>
<svg class="a" style="left:346px;top:51.5px" width="9" height="10" viewBox="0 0 9 10"><path d="M3 3.8l1.5-1.6 1.5 1.6M3 5.8l1.5 1.6 1.5-1.6" fill="none" stroke="#fff" stroke-width="0.8"/></svg>
<svg class="a" style="left:368px;top:50px" width="15" height="15" viewBox="0 0 15 15"><path d="M3 3l8 8M11 3l-8 8" stroke="#9a9a7a" stroke-width="0.6"/><path d="M0.5 0.5L5.1 2.11L2.11 5.1z" fill="#a6e28f"/><path d="M13.5 0.5L8.9 2.11L11.89 5.1z" fill="#a6e28f"/><path d="M0.5 13.5L5.1 11.89L2.11 8.9z" fill="#a6e28f"/><path d="M13.5 13.5L8.9 11.89L11.89 8.9z" fill="#a6e28f"/></svg>
<svg class="a" style="left:388px;top:50px" width="15" height="15" viewBox="0 0 15 15"><path d="M4.8 4.8L0.20000000000000018 3.19L3.19 0.20000000000000018z" fill="#a6e28f"/><path d="M9.2 4.8L13.799999999999999 3.19L10.809999999999999 0.20000000000000018z" fill="#a6e28f"/><path d="M4.8 9.2L0.20000000000000018 10.809999999999999L3.19 13.799999999999999z" fill="#a6e28f"/><path d="M9.2 9.2L13.799999999999999 10.809999999999999L10.809999999999999 13.799999999999999z" fill="#a6e28f"/><circle cx="7" cy="7" r="2.1" fill="#2a9ad8"/></svg>
<svg class="a" style="left:408px;top:49.5px" width="15" height="15" viewBox="0 0 15 15"><circle cx="7.2" cy="7.2" r="6.8" fill="#2a9ad8"/><path d="M4 4l6.4 6.4M10.4 4L4 10.4" stroke="#7aa0a0" stroke-width="0.5"/><path d="M2.8 2.8L6.199999999999999 3.9899999999999998L3.9899999999999998 6.199999999999999z" fill="#a6e28f"/><path d="M2.8 11.600000000000001L6.199999999999999 10.410000000000002L3.9899999999999998 8.200000000000001z" fill="#a6e28f"/><path d="M11.600000000000001 2.8L8.200000000000001 3.9899999999999998L10.410000000000002 6.199999999999999z" fill="#a6e28f"/><path d="M11.600000000000001 11.600000000000001L8.200000000000001 10.410000000000002L10.410000000000002 8.200000000000001z" fill="#a6e28f"/></svg>
<svg class="a" style="left:428px;top:49.5px" width="15" height="15" viewBox="0 0 15 15"><circle cx="7.2" cy="7.2" r="6.3" fill="#2a9ad8"/><path d="M3.6 3.6L0.20000000000000018 2.41L2.41 0.20000000000000018z" fill="#a6e28f"/><path d="M10.8 3.6L14.200000000000001 2.41L11.99 0.20000000000000018z" fill="#a6e28f"/><path d="M3.6 10.8L0.20000000000000018 11.99L2.41 14.200000000000001z" fill="#a6e28f"/><path d="M10.8 10.8L14.200000000000001 11.99L11.99 14.200000000000001z" fill="#a6e28f"/></svg>
<svg class="a" style="left:447.5px;top:50px" width="16" height="15" viewBox="0 0 16 15"><rect x="0.5" y="0.5" width="13" height="13" fill="none" stroke="#777" stroke-width="0.6" stroke-dasharray="1.5 1.5"/><circle cx="8.3" cy="6" r="3.8" fill="#c8e4ec" stroke="#ddd" stroke-width="1"/><path d="M11 8.8l3.8 4.2" stroke="#e0e0e0" stroke-width="1.5"/></svg>
<svg class="a" style="left:469px;top:50.5px" width="15" height="14" viewBox="0 0 15 14"><path d="M9.2 3v5" stroke="#9ad880" stroke-width="1.6"/><path d="M7.2 3.5l2-3 2 3z" fill="#9ad880"/><rect x="7.5" y="7.5" width="5.5" height="5" fill="#e03030"/><path d="M7.5 10h-4.5" stroke="#f0c020" stroke-width="1.6"/><path d="M3.5 8l-3 2 3 2z" fill="#f0c020"/><text x="0" y="5.3" font-size="5.5" fill="#8a8a8a" font-family="Liberation Sans">+X</text></svg>
<svg class="a" style="left:489px;top:50.5px" width="15" height="14" viewBox="0 0 15 14"><path d="M2.2 3v5" stroke="#9ad880" stroke-width="1.6"/><path d="M0.19999999999999996 3.5l2-3 2 3z" fill="#9ad880"/><rect x="0.3" y="7.5" width="5.5" height="5" fill="#e03030"/><path d="M5.3 10h4.5" stroke="#f0c020" stroke-width="1.6"/><path d="M9.3 8l3 2-3 2z" fill="#f0c020"/><text x="6.5" y="5.3" font-size="5.5" fill="#8a8a8a" font-family="Liberation Sans">-X</text></svg>
<svg class="a" style="left:509px;top:50.5px" width="15" height="14" viewBox="0 0 15 14"><path d="M3.2 3v5" stroke="#9ad880" stroke-width="1.6"/><path d="M1.2 3.5l2-3 2 3z" fill="#9ad880"/><rect x="0.3" y="7.5" width="5.5" height="5" fill="#f0c020"/><path d="M5.3 10h4.5" stroke="#e03030" stroke-width="1.6"/><path d="M9.3 8l3 2-3 2z" fill="#e03030"/><text x="6" y="5.3" font-size="5.5" fill="#8a8a8a" font-family="Liberation Sans">+Y</text></svg>
<svg class="a" style="left:529px;top:50.5px" width="15" height="14" viewBox="0 0 15 14"><path d="M10.2 3v5" stroke="#9ad880" stroke-width="1.6"/><path d="M8.2 3.5l2-3 2 3z" fill="#9ad880"/><rect x="7.5" y="7.5" width="5.5" height="5" fill="#f0c020"/><path d="M7.5 10h-4.5" stroke="#e03030" stroke-width="1.6"/><path d="M3.5 8l-3 2 3 2z" fill="#e03030"/><text x="0" y="5.3" font-size="5.5" fill="#8a8a8a" font-family="Liberation Sans">-Y</text></svg>
<svg class="a" style="left:549px;top:50.5px" width="15" height="14" viewBox="0 0 15 14"><path d="M10.2 3v5" stroke="#f0c020" stroke-width="1.6"/><path d="M8.2 3.5l2-3 2 3z" fill="#f0c020"/><rect x="7.5" y="7.5" width="5.5" height="5" fill="#9ad880"/><path d="M7.5 10h-4.5" stroke="#e03030" stroke-width="1.6"/><path d="M3.5 8l-3 2 3 2z" fill="#e03030"/><text x="0" y="5.3" font-size="5.5" fill="#8a8a8a" font-family="Liberation Sans">+Z</text></svg>
<svg class="a" style="left:569px;top:50.5px" width="15" height="14" viewBox="0 0 15 14"><path d="M2.2 3v5" stroke="#f0c020" stroke-width="1.6"/><path d="M0.19999999999999996 3.5l2-3 2 3z" fill="#f0c020"/><rect x="0.3" y="7.5" width="5.5" height="5" fill="#9ad880"/><path d="M5.3 10h4.5" stroke="#e03030" stroke-width="1.6"/><path d="M9.3 8l3 2-3 2z" fill="#e03030"/><text x="6" y="5.3" font-size="5.5" fill="#8a8a8a" font-family="Liberation Sans">-Z</text></svg>
<svg class="a" style="left:588px;top:50px" width="16" height="15" viewBox="0 0 16 15"><path d="M8 8V3" stroke="#f0c020" stroke-width="1.6"/><path d="M6 3.5l2-3 2 3z" fill="#f0c020"/><path d="M8 8l-5 4" stroke="#9ad880" stroke-width="1.6"/><path d="M8 8l5 4" stroke="#e03030" stroke-width="1.8"/><rect x="6.5" y="6.5" width="3" height="3" fill="#c0a030"/></svg>
<svg class="a" style="left:612px;top:54px" width="8" height="7" viewBox="0 0 8 7"><path d="M1 1l2.5 2.5L1 6M4 1l2.5 2.5L4 6" fill="none" stroke="#aaa" stroke-width="0.9"/></svg>
<div class="a" style="left:627px;top:47.5px;width:25px;height:19px;background:#343434"></div>
<svg class="a" style="left:631px;top:50px" width="15" height="15" viewBox="0 0 15 15"><path d="M4 11V4" stroke="#f0c020" stroke-width="1.5"/><path d="M4 11l-3 2.5" stroke="#9ad880" stroke-width="1.5"/><path d="M4 11h5" stroke="#e03030" stroke-width="1.5"/><ellipse cx="10" cy="3" rx="3" ry="2" fill="#eee"/><circle cx="10" cy="3" r="1.1" fill="#335"/></svg>
<svg class="a" style="left:649px;top:54px" width="8" height="7" viewBox="0 0 8 7"><path d="M1 1l2.5 2.5L1 6M4 1l2.5 2.5L4 6" fill="none" stroke="#aaa" stroke-width="0.9"/></svg>
<div class="a" style="left:661px;top:47.5px;width:23px;height:19px;background:#343434"></div>
<svg class="a" style="left:666px;top:50px" width="14" height="15" viewBox="0 0 14 15"><circle cx="7" cy="6" r="3.8" fill="#f6c21c"/><rect x="5.3" y="9" width="3.4" height="3" fill="#f6c21c"/><path d="M5.5 12.7h3" stroke="#999" stroke-width="0.8"/><g stroke="#8a8a5a" stroke-width="0.5"><path d="M7 0.3v1M1.2 6h1M11.8 6h1M2.8 1.8l0.7 0.7M11.2 1.8l-0.7 0.7"/></g></svg>
<svg class="a" style="left:10.5px;top:71px" width="12" height="14" viewBox="0 0 12 14"><rect x="0.3" y="0.3" width="11" height="13.3" rx="1.2" fill="#d6d6d6"/><rect x="1.8" y="1.8" width="8" height="2.6" fill="#f4f4f4" stroke="#888" stroke-width="0.4"/><g fill="#555"><rect x="1.8" y="5.6" width="1.9" height="1.7"/><rect x="4.7" y="5.6" width="1.9" height="1.7"/><rect x="7.6" y="5.6" width="1.9" height="1.7"/><rect x="1.8" y="8.2" width="1.9" height="1.7"/><rect x="4.7" y="8.2" width="1.9" height="1.7"/><rect x="7.6" y="8.2" width="1.9" height="1.7"/><rect x="1.8" y="10.8" width="1.9" height="1.7"/><rect x="4.7" y="10.8" width="1.9" height="1.7"/><rect x="7.6" y="10.8" width="1.9" height="1.7"/></g></svg>
<svg class="a" style="left:31px;top:71.5px" width="15" height="14" viewBox="0 0 15 14"><ellipse cx="7.2" cy="6.8" rx="6.8" ry="5" transform="rotate(35 7.2 6.8)" fill="#5cb84a"/><ellipse cx="6.6" cy="6.3" rx="4" ry="2.6" transform="rotate(35 6.6 6.3)" fill="#7ab8d8"/><ellipse cx="6.6" cy="6.3" rx="2.2" ry="1.3" transform="rotate(35 6.6 6.3)" fill="#3a6aa0"/></svg>
<svg class="a" style="left:52.8px;top:71px" width="15" height="15" viewBox="0 0 15 15"><path d="M3 13.5L0.8 11V2.5L3.5 0.8h8.5l2.5 2.5v8.5l-2.5 2.2H3zM14.5 3.3H5.5M3 13.5V5.3L0.8 2.5M3 5.3l2.5-2" fill="none" stroke="#8a8a7a" stroke-width="0.6"/><path d="M1 2.5l2.5-1.5h7l-2.5 1.5z" fill="#c0ecb0"/><path d="M1 2.5h7v8.5h-7z" fill="#8cd66e"/><path d="M8 2.5l2.5-1.5v8.5l-2.5 1.5z" fill="#5aa84a"/><path d="M2.5 3.5v6.5" stroke="#b8f0a0" stroke-width="0.8"/><path d="M1 2.5h7v8.5h-7z" fill="none" stroke="#d0f0c0" stroke-width="0.5"/></svg>
<svg class="a" style="left:75px;top:71px" width="15" height="15" viewBox="0 0 15 15"><path d="M3 13.5L0.8 11V2.5L3.5 0.8h8.5l2.5 2.5v8.5l-2.5 2.2H3zM14.5 3.3H5.5M3 13.5V5.3L0.8 2.5M3 5.3l2.5-2" fill="none" stroke="#8a8a7a" stroke-width="0.6"/><path d="M2 2.5l2.5-1.5h7l-2.5 1.5z" fill="#c0ecb0"/><path d="M2 2.5h7v8.5h-7z" fill="#8cd66e"/><path d="M9 2.5l2.5-1.5v8.5l-2.5 1.5z" fill="#5aa84a"/><path d="M3.5 3.5v6.5" stroke="#b8f0a0" stroke-width="0.8"/><path d="M2 2.5h7v8.5h-7z" fill="none" stroke="#d0f0c0" stroke-width="0.5"/></svg>
<svg class="a" style="left:96.7px;top:71px" width="15" height="15" viewBox="0 0 15 15"><path d="M3 13.5L0.8 11V2.5L3.5 0.8h8.5l2.5 2.5v8.5l-2.5 2.2H3zM14.5 3.3H5.5M3 13.5V5.3L0.8 2.5M3 5.3l2.5-2" fill="none" stroke="#8a8a7a" stroke-width="0.6"/><path d="M1.5 3.5l4-1.5v5l-4 1.5zM7.5 4.5l5.5-2v8l-5.5 2z" fill="#8cd66e"/><path d="M7 9l-3.5 4" stroke="#8a8a7a" stroke-width="0.6"/></svg>
<svg class="a" style="left:120px;top:71px" width="13" height="15" viewBox="0 0 13 15"><path d="M6.5 0.5l6 2.5v8.5l-6 3-6-3V3z" fill="#9a9a9a"/><path d="M3 4l3.5-1.5 3.5 1.5v6l-3.5 2-3.5-2z" fill="#4a7a3a"/><circle cx="6.5" cy="7" r="1.6" fill="#7ab05a"/></svg>
<svg class="a" style="left:140.5px;top:71px" width="15" height="15" viewBox="0 0 15 15"><circle cx="7.3" cy="7.3" r="5.8" fill="#cfe6ee"/><path d="M7.3 0.3v14M0.3 7.3h14" stroke="#bcd" stroke-width="1"/><circle cx="7.3" cy="7.3" r="5.8" fill="none" stroke="#e8f4f8" stroke-width="0.8"/><ellipse cx="7.3" cy="7.3" rx="2.5" ry="5.8" fill="none" stroke="#7a9aa8" stroke-width="0.5"/><path d="M1.5 5h11.6M1.5 9.6h11.6" stroke="#7a9aa8" stroke-width="0.5"/></svg>
<svg class="a" style="left:163px;top:72px" width="13" height="13" viewBox="0 0 13 13"><circle cx="5" cy="6.5" r="2.5" fill="#5e7a5e"/><g fill="none" stroke="#4e5e4e" stroke-width="0.6"><path d="M1 2.5h9M1 10.5h9M8 6.5h4"/></g></svg>
<svg class="a" style="left:185px;top:72px" width="15" height="13" viewBox="0 0 15 13"><path d="M0.5 7l8-3 4-3.5L14 11H0.5z" fill="#7a9a7a"/></svg>
<svg class="a" style="left:207.5px;top:71px" width="14" height="14" viewBox="0 0 14 14"><circle cx="6.5" cy="7" r="6" fill="none" stroke="#8a8a80" stroke-width="0.6"/><circle cx="4" cy="4.5" r="1.7" fill="#f0f0f0"/><circle cx="8.5" cy="8.5" r="2.3" fill="#8ad070"/></svg>
<svg class="a" style="left:228.5px;top:70.5px" width="15" height="15" viewBox="0 0 15 15"><circle cx="7.5" cy="8" r="5.5" fill="none" stroke="#8a8a80" stroke-width="0.6"/><circle cx="1.5" cy="1.5" r="1.4" fill="#f0f0f0"/><circle cx="5" cy="10.5" r="1" fill="#8ad070"/><circle cx="8.5" cy="9.5" r="2" fill="#8ad070"/></svg>
<svg class="a" style="left:257.5px;top:72px" width="10" height="12" viewBox="0 0 10 12"><path d="M1 1v9.5h8" fill="none" stroke="#777" stroke-width="0.6"/><ellipse cx="4.5" cy="6.5" rx="1.2" ry="2.5" fill="#3a80c0"/></svg>
<svg class="a" style="left:278px;top:72px" width="13" height="13" viewBox="0 0 13 13"><rect x="0" y="0" width="10" height="9" fill="#eef4ff"/><rect x="1.5" y="1.5" width="7" height="6" fill="#dce8f8"/><rect x="6.8" y="6.3" width="5.5" height="6" fill="#9ad880" stroke="#3a3a3a" stroke-width="0.8"/></svg>
<svg class="a" style="left:300px;top:71.5px" width="13" height="13" viewBox="0 0 13 13"><path d="M0.5 1v11h12" fill="none" stroke="#999" stroke-width="0.5"/><path d="M2 12V6h2v6zM4 12V2h2v10zM6 12V0.5h2V12zM8 12V5h2v7zM10 12V9h2v3z" fill="#4ab848"/><path d="M2 12V9h2v3zM10 12V9h2v3z" fill="#2a70c8"/><path d="M8 12V8h2v4z" fill="#f0d020"/></svg>
<svg class="a" style="left:322px;top:71px" width="15" height="14" viewBox="0 0 15 14"><circle cx="3.5" cy="4" r="2.6" fill="#1a2a3a" stroke="#3a7ab0" stroke-width="0.8"/><path d="M3.5 2.5v1.7" stroke="#aaa" stroke-width="0.5"/><circle cx="10.5" cy="4" r="2.6" fill="#d8b040" stroke="#8a7020" stroke-width="0.5"/><path d="M0.5 12.5V10l1.5-1 1.5 1 1.5-1 1.5 1 1.5-1 1.5 1 1.5-1 1.5 1 1.5-1V12.5z" fill="#2a86c8"/><path d="M2 9.5v3M4 9.5v3M6 9.5v3M8 9.5v3M10 9.5v3M12 9.5v3" stroke="#1a3a5a" stroke-width="0.5"/><path d="M0.5 13h13.5" stroke="#3a90d0" stroke-width="0.8"/></svg>
<svg class="a" style="left:344.5px;top:71px" width="14" height="14" viewBox="0 0 14 14"><path d="M0.5 1.5l12-1-1 12.5-11-0.5z" fill="#6cc060"/><path d="M0.5 1.5l12 11.5" stroke="#3a8ac8" stroke-width="1.5"/><path d="M2 5l8 8" stroke="#a0e0a0" stroke-width="0.6"/></svg>
<svg class="a" style="left:366px;top:71px" width="15" height="14" viewBox="0 0 15 14"><circle cx="3.5" cy="4" r="2.4" fill="#1a2a3a" stroke="#3a7ab0" stroke-width="0.8"/><path d="M3.5 2.7v1.5" stroke="#aaa" stroke-width="0.5"/><rect x="8" y="1.5" width="5.5" height="5" fill="#3a3a3a"/><path d="M8.5 6l2.3-3.5 2.3 3.5z" fill="#d8e0a0"/><path d="M0.5 12.5V10l1.5-1 1.5 1 1.5-1 1.5 1 1.5-1 1.5 1 1.5-1 1.5 1 1.5-1V12.5z" fill="#2a86c8"/><path d="M2 9.5v3M4 9.5v3M6 9.5v3M8 9.5v3M10 9.5v3M12 9.5v3" stroke="#1a3a5a" stroke-width="0.5"/><path d="M0.5 13h13.5" stroke="#3a90d0" stroke-width="0.8"/></svg>
<svg class="a" style="left:387.5px;top:70.5px" width="15" height="15" viewBox="0 0 15 15"><path d="M7.5 0.5l6.5 2.5v8.5l-6.5 3.3-6.5-3.3V3z" fill="#e6eef6"/><path d="M7.5 3v9M3.6 5.2l7.8 4.5M11.4 5.2l-7.8 4.5" stroke="#5a8ac0" stroke-width="0.8"/></svg>
<svg class="a" style="left:410px;top:71px" width="14" height="14" viewBox="0 0 14 14"><path d="M3 0.8c-1.5 0-1.5 1-1.5 2.5s0 2.7-1 3.5c1 0.8 1 2 1 3.5s0 2.5 1.5 2.5M11 0.8c1.5 0 1.5 1 1.5 2.5s0 2.7 1 3.5c-1 0.8-1 2-1 3.5s0 2.5-1.5 2.5" fill="none" stroke="#aaa" stroke-width="0.7"/><g fill="#3a9ad8"><circle cx="4.7" cy="9" r="0.9"/><circle cx="7" cy="9" r="0.9"/><circle cx="9.3" cy="9" r="0.9"/></g></svg>
<svg class="a" style="left:435.5px;top:71px" width="15" height="14" viewBox="0 0 15 14"><path d="M0.5 10l10.5-9.5 3.5 3.2-10.5 9.5z" fill="#e8c020"/><path d="M4 8.5l1 1M6 6.7l1 1M8 4.9l1 1M10 3.1l1 1" stroke="#8a6a10" stroke-width="0.5"/></svg>
<svg class="a" style="left:173px;top:101.5px" width="9" height="10" viewBox="0 0 9 10"><rect x="0.5" y="1.8" width="7.5" height="6" rx="1" fill="#eeeeee"/><rect x="2.5" y="0.8" width="3.5" height="1.5" fill="#eeeeee"/><circle cx="4.25" cy="4.8" r="1.9" fill="#556"/><circle cx="4.25" cy="4.8" r="1.1" fill="#cde"/><path d="M0.5 8l2.5-2.5 1.5 3z" fill="#e02828"/><circle cx="4.25" cy="4.8" r="1" fill="#3a9a5a"/></svg>
<svg class="a" style="left:187px;top:101.5px" width="9" height="10" viewBox="0 0 9 10"><rect x="0.5" y="1.8" width="7.5" height="6" rx="1" fill="#7a7a7a"/><rect x="2.5" y="0.8" width="3.5" height="1.5" fill="#7a7a7a"/><circle cx="4.25" cy="4.8" r="1.9" fill="#556"/><circle cx="4.25" cy="4.8" r="1.1" fill="#cde"/></svg>
<svg class="a" style="left:202.5px;top:101.5px" width="9" height="10" viewBox="0 0 9 10"><rect x="0.5" y="1.8" width="7.5" height="6" rx="1" fill="#efefef"/><rect x="2.5" y="0.8" width="3.5" height="1.5" fill="#efefef"/><circle cx="4.25" cy="4.8" r="1.9" fill="#556"/><circle cx="4.25" cy="4.8" r="1.1" fill="#cde"/></svg>
<div class="a" style="left:219.3px;top:101.6px;font-size:6.6px;line-height:8.6px;color:#7e7e7e;white-space:nowrap;">3D</div>
<svg class="a" style="left:232.5px;top:101.5px" width="9" height="10" viewBox="0 0 9 10"><circle cx="3.8" cy="3.8" r="3.2" fill="#e8e8e8"/><circle cx="3.8" cy="3.8" r="1.8" fill="#9ab"/><path d="M5.8 5.8l2.7 2.7" stroke="#e8c020" stroke-width="1.4"/></svg>
<svg class="a" style="left:247.5px;top:100.5px" width="11" height="12" viewBox="0 0 11 12"><rect x="0.5" y="0.5" width="10" height="11" fill="none" stroke="#5a5a5a" stroke-width="0.5" stroke-dasharray="1 1"/><path d="M5.5 2.5l1 2.5 2.5 1-2.5 1-1 2.5-1-2.5-2.5-1 2.5-1z" fill="#e8f4e0"/></svg>
<svg class="a" style="left:261px;top:100.5px" width="10" height="12" viewBox="0 0 10 12"><rect x="0.5" y="0.5" width="9" height="11" fill="none" stroke="#5a5a5a" stroke-width="0.5" stroke-dasharray="1 1"/><rect x="2.5" y="4.5" width="5" height="3" fill="#8a3040"/></svg>
<svg class="a" style="left:275.5px;top:101.5px" width="9" height="10" viewBox="0 0 9 10"><path d="M4 1v4.5M1.8 3.2h4.5" stroke="#9ae090" stroke-width="1.2"/><path d="M0.5 7h5" stroke="#d03030" stroke-width="1.2"/><path d="M5.5 6.5l3 3" stroke="#ddd" stroke-width="0.6"/></svg>
<svg class="a" style="left:292.5px;top:101.5px" width="8" height="10" viewBox="0 0 8 10"><path d="M4 1.5l3.5 6.5h-7z" fill="#e6f0d8"/><path d="M4 4.5l2 3.5h-4z" fill="#8ad07a"/></svg>
<svg class="a" style="left:305.5px;top:101.5px" width="8" height="10" viewBox="0 0 8 10"><path d="M4 1.5l3.5 6.5h-7z" fill="none" stroke="#9a9a9a" stroke-width="0.9"/></svg>
<svg class="a" style="left:319.5px;top:101.5px" width="8" height="10" viewBox="0 0 8 10"><path d="M1 6.5c-1-2 0.5-4 2.5-3.5 0.8-2 3.7-1.5 3.8 0.5 1 0.5 0.7 3-0.5 3z" fill="#7ad06a"/><path d="M3 7.5l0.8 1.5" stroke="#bbb" stroke-width="0.5"/></svg>
<svg class="a" style="left:332.5px;top:101.5px" width="8" height="10" viewBox="0 0 8 10"><path d="M1 6.5c-1-2 0.5-4 2.5-3.5 0.8-2 3.7-1.5 3.8 0.5 1 0.5 0.7 3-0.5 3z" fill="none" stroke="#a06a6a" stroke-width="0.8"/><path d="M3.5 7.5l0.3 1.5" stroke="#bbb" stroke-width="0.5"/></svg>
<svg class="a" style="left:345px;top:101.5px" width="7" height="10" viewBox="0 0 7 10"><path d="M1 5l4-3v6z" fill="#e0e0e0"/></svg>
<svg class="a" style="left:357.5px;top:101.5px" width="9" height="10" viewBox="0 0 9 10"><g fill="#a05050"><circle cx="2" cy="3" r="0.8"/><circle cx="4.5" cy="3" r="0.8"/><circle cx="7" cy="3" r="0.8"/><circle cx="2" cy="6" r="0.8"/><circle cx="4.5" cy="6" r="0.8"/><circle cx="7" cy="6" r="0.8"/></g></svg>
<svg class="a" style="left:372px;top:101.5px" width="9" height="10" viewBox="0 0 9 10"><g fill="#3a8ad0"><circle cx="1.5" cy="2.5" r="1"/><circle cx="1.5" cy="6.5" r="1"/></g><circle cx="5" cy="4.5" r="2.2" fill="#e8e8e8"/><path d="M6.5 6l2 2.5" stroke="#ddd" stroke-width="0.9"/></svg>
<svg class="a" style="left:386px;top:101.5px" width="9" height="10" viewBox="0 0 9 10"><path d="M1 8C0.5 4 3 1 7.5 1 8 5 6 8.5 1 8z" fill="#c09a20"/><path d="M1.5 7.5l5-5" stroke="#806010" stroke-width="0.5"/></svg>
<svg class="a" style="left:401px;top:101.5px" width="7" height="10" viewBox="0 0 7 10"><circle cx="2" cy="4" r="1.1" fill="#7a7a50"/><path d="M3 5l3 3" stroke="#6a6a5a" stroke-width="0.6"/></svg>
<svg class="a" style="left:413.5px;top:101.5px" width="8" height="10" viewBox="0 0 8 10"><path d="M4 1.5l3.5 6.5h-7z" fill="#e6f0d8"/><path d="M4 4.5l2 3.5h-4z" fill="#8ad07a"/></svg>
<svg class="a" style="left:426.5px;top:101.5px" width="8" height="10" viewBox="0 0 8 10"><path d="M4 1.5l3.5 6.5h-7z" fill="none" stroke="#9a9a9a" stroke-width="0.9"/></svg>
<svg class="a" style="left:439px;top:101.5px" width="9" height="10" viewBox="0 0 9 10"><path d="M3 4l2.5 4.5h-5z" fill="#9ae080"/><path d="M5 2.5a1.6 1.6 0 1 1 2 1.5v1.2" fill="none" stroke="#999" stroke-width="0.7"/></svg>
<svg class="a" style="left:453px;top:101.5px" width="8" height="10" viewBox="0 0 8 10"><circle cx="2" cy="7" r="1.5" fill="#d04030"/><path d="M4 2.5a1.6 1.6 0 1 1 2 1.5v1.2" fill="none" stroke="#999" stroke-width="0.7"/></svg>
<svg class="a" style="left:466.5px;top:101.5px" width="8" height="10" viewBox="0 0 8 10"><path d="M4 1.2v7M0.6 4.7h7" stroke="#2a8ab0" stroke-width="2"/></svg>
<svg class="a" style="left:480px;top:101.5px" width="8" height="10" viewBox="0 0 8 10"><path d="M0.5 4.7h7" stroke="#2a7a9a" stroke-width="1.6"/></svg>
<svg class="a" style="left:493.5px;top:101.5px" width="7" height="11" viewBox="0 0 7 11"><rect x="0.8" y="2" width="5.5" height="7.5" rx="0.5" fill="#8a8a8a"/><rect x="0.3" y="1" width="6.5" height="1.2" fill="#9a9a9a"/><path d="M2.5 3v5.5M4.5 3v5.5" stroke="#666" stroke-width="0.4"/></svg>
<div class="a" style="left:587px;top:101.3px;font-size:7px;line-height:9px;color:#f4f4f4;white-space:nowrap;font-weight:bold;letter-spacing:-0.15px"><u>RenderView1</u></div>
<div class="a" style="left:633px;top:100.5px;width:55px;height:13.5px;background:#3a3a3a"></div>
<svg class="a" style="left:636.5px;top:103px" width="8" height="8" viewBox="0 0 8 8"><rect x="0.5" y="0.5" width="6.5" height="6.5" fill="#e4e4ec"/><path d="M3.75 0.5v6.5" stroke="#8a8aa8" stroke-width="0.7"/></svg>
<svg class="a" style="left:650.5px;top:103px" width="8" height="8" viewBox="0 0 8 8"><rect x="0.5" y="0.5" width="6.5" height="6.5" fill="#e4e4ec"/><path d="M0.5 3.75h6.5" stroke="#8a8aa8" stroke-width="0.7"/></svg>
<svg class="a" style="left:664px;top:103px" width="9" height="8" viewBox="0 0 9 8"><rect x="0.5" y="0.5" width="7" height="6.5" fill="#303030" stroke="#222" stroke-width="0.8"/></svg>
<svg class="a" style="left:678.5px;top:103.5px" width="7" height="7" viewBox="0 0 7 7"><path d="M1 1l5 5M6 1L1 6" stroke="#f4f4f4" stroke-width="1.3"/></svg>
<div class="a" style="left:107.5px;top:27px;width:1px;height:17px;background:repeating-linear-gradient(#484848 0 1px,transparent 1px 2px)"></div>
<div class="a" style="left:170.5px;top:27px;width:1px;height:17px;background:repeating-linear-gradient(#484848 0 1px,transparent 1px 2px)"></div>
<div class="a" style="left:213.5px;top:27px;width:1px;height:17px;background:repeating-linear-gradient(#484848 0 1px,transparent 1px 2px)"></div>
<div class="a" style="left:279.5px;top:27px;width:1px;height:17px;background:repeating-linear-gradient(#484848 0 1px,transparent 1px 2px)"></div>
<div class="a" style="left:279.5px;top:48px;width:1px;height:17px;background:repeating-linear-gradient(#484848 0 1px,transparent 1px 2px)"></div>
<div class="a" style="left:362.5px;top:48px;width:1px;height:17px;background:repeating-linear-gradient(#484848 0 1px,transparent 1px 2px)"></div>
<div class="a" style="left:684.5px;top:48px;width:1px;height:17px;background:repeating-linear-gradient(#484848 0 1px,transparent 1px 2px)"></div>
<div class="a" style="left:251.5px;top:69px;width:1px;height:17px;background:repeating-linear-gradient(#484848 0 1px,transparent 1px 2px)"></div>
<div class="a" style="left:2px;top:28px;width:1px;height:15px;background:repeating-linear-gradient(#3c3c3c 0 1px,transparent 1px 3px)"></div>
<div class="a" style="left:2px;top:49px;width:1px;height:15px;background:repeating-linear-gradient(#3c3c3c 0 1px,transparent 1px 3px)"></div>
<div class="a" style="left:2px;top:70px;width:1px;height:15px;background:repeating-linear-gradient(#3c3c3c 0 1px,transparent 1px 3px)"></div>
<svg class="a" style="left:195px;top:345px" width="50" height="45" viewBox="0 0 50 45">
<path d="M13 31.3V15" stroke="#b8b87a" stroke-width="0.7"/><path d="M13 31.3L23 27.7" stroke="#8a4040" stroke-width="0.7"/><path d="M13 31.3L27.5 34" stroke="#3a9a4a" stroke-width="0.7"/>
<path d="M11.3 16.5L12.5 11.5 14.5 16.5z" fill="#e8e860"/><ellipse cx="12.5" cy="16" rx="1.6" ry="1.2" fill="#d8d040"/>
<ellipse cx="23" cy="27.5" rx="1.8" ry="1.3" fill="#d02020"/>
<ellipse cx="28.5" cy="34" rx="2.3" ry="1.6" fill="#20b030"/>
<text x="14.5" y="16.5" font-size="6" fill="#f0f0f0" font-family="Liberation Sans">Y</text>
<text x="23.5" y="27.5" font-size="5.5" fill="#f0f0f0" font-family="Liberation Sans">X</text>
<text x="28" y="33" font-size="5.5" fill="#f0f0f0" font-family="Liberation Sans">Z</text>
</svg>

<svg class="a" style="left:0;top:0" width="690" height="431" viewBox="0 0 690 431">
<polygon points="302.5,215.7 373,222 380.5,322.8 312.4,305.4" fill="#bab8b2"/>
<polygon points="373,222 437.8,206.6 441,291.5 380.5,322.8" fill="#bab8b2"/>
<polygon points="302.5,215.7 369,201 437.8,206.6 373,222" fill="#c8c6de"/>
<g><path d="M358.7 237.1L366.1 239.1M320.0 285.3L317.1 291.4M357.2 316.8L364.1 318.6M372.0 303.0L379.3 306.4M363.9 285.1L367.3 294.2M315.8 262.0L319.8 270.0M364.9 277.0L363.9 285.1M326.7 232.2L335.4 235.5M371.6 288.9L375.6 295.4M342.2 258.7L348.1 260.9M329.5 263.9L339.6 265.6M304.6 229.8L304.9 237.1M343.3 275.2L348.2 283.0M355.4 262.1L362.8 269.8M325.0 241.1L330.1 248.1M311.4 230.6L317.0 240.0M317.0 240.0L312.5 245.5M348.1 260.9L355.4 262.1M359.9 294.1L367.3 294.2M310.6 289.1L317.1 291.4M328.0 287.1L334.6 295.3M342.8 219.3L338.7 225.7M350.5 315.1L357.2 316.8M364.9 277.0L371.6 288.9M324.5 279.9L320.0 285.3M360.0 254.6L355.4 262.1M337.9 305.6L333.8 310.9M333.3 257.8L339.6 265.6M344.2 250.7L350.8 251.2M344.7 226.0L343.6 236.3M348.2 283.0L355.8 285.8M379.4 322.5L380.5 322.8M312.5 245.5L310.3 254.1M307.2 223.4L311.4 230.6M309.8 281.5L310.6 289.1M334.6 295.3L330.7 301.7M319.0 217.2L316.6 224.7M376.8 273.7L374.7 281.7M359.8 309.2L364.1 318.6M304.6 229.8L311.4 230.6M329.5 263.9L326.8 272.8M335.8 274.1L332.5 280.5M352.9 292.2L350.0 300.2M337.0 250.5L342.2 258.7M369.7 230.0L366.1 239.1M314.5 299.8L319.5 307.2M372.9 222.0L373.6 229.6M343.4 313.3L350.5 315.1M357.2 276.8L363.9 285.1M367.2 254.6L371.9 262.1M345.5 267.3L343.3 275.2M344.7 226.0L354.0 228.4M309.4 275.5L312.7 282.8M345.5 305.3L352.1 308.2M358.3 220.7L362.4 230.6M333.3 257.8L342.2 258.7M302.9 215.7L307.2 223.4M316.6 224.7L323.3 226.1M319.4 255.1L326.2 255.7M326.9 294.5L323.3 299.3M343.3 275.2L350.1 277.3M329.9 227.4L338.7 225.7M309.8 281.5L312.7 282.8M326.2 255.7L333.3 257.8M378.7 299.1L379.3 306.4M376.8 273.7L376.8 272.7M310.3 238.5L306.1 246.8M317.0 240.0L321.6 249.2M342.2 258.7L339.6 265.6M316.2 277.4L324.5 279.9M340.2 298.0L345.5 305.3M376.2 265.1L376.8 273.7M327.4 309.2L333.8 310.9M333.8 310.9L343.4 313.3M319.4 255.1L315.8 262.0M326.9 294.5L330.7 301.7M350.0 300.2L352.1 308.2M375.7 313.0L373.7 321.1M328.0 287.1L326.9 294.5M314.5 299.8L323.3 299.3M338.3 280.3L348.2 283.0M321.6 249.2L330.1 248.1M364.3 245.2L360.0 254.6M339.6 265.6L343.3 275.2M324.5 279.9L332.5 280.5M355.0 267.9L357.2 276.8M332.5 280.5L338.3 280.3M344.7 226.0L349.7 236.7M326.7 232.2L325.0 241.1M354.0 228.4L358.7 237.1M310.9 269.8L319.8 270.0M306.1 246.8L310.3 254.1M308.4 261.1L308.4 269.2M312.7 282.8L310.6 289.1M312.4 305.4L319.5 307.2M323.3 299.3L330.7 301.7M355.9 243.8L350.8 251.2M335.8 274.1L343.3 275.2M319.8 270.0L326.8 272.8M311.6 216.5L319.0 217.2M367.3 294.2L372.0 303.0M364.3 245.2L367.2 254.6M335.8 274.1L338.3 280.3M329.9 227.4L335.4 235.5M363.9 285.1L359.9 294.1M333.2 218.4L342.8 219.3M348.1 260.9L345.5 267.3M316.2 277.4L312.7 282.8M338.7 225.7L344.7 226.0M350.8 251.2L348.1 260.9M320.6 231.1L317.0 240.0M333.2 218.4L329.9 227.4M339.5 241.8L344.2 250.7M343.6 236.3L349.0 242.6M330.7 301.7L337.9 305.6M332.5 280.5L328.0 287.1M317.1 291.4L326.9 294.5M308.4 261.1L315.8 262.0M345.6 290.0L350.0 300.2M374.7 281.7L371.6 288.9M345.5 305.3L343.4 313.3M366.1 239.1L372.9 239.0M374.1 256.2L376.2 265.1M362.8 269.8L369.1 271.1M335.4 235.5L339.5 241.8M355.8 285.8L363.9 285.1M369.1 271.1L376.8 273.7M330.1 248.1L337.0 250.5M364.1 318.6L373.7 321.1M320.6 231.1L325.0 241.1M343.3 275.2L338.3 280.3M311.6 216.5L307.2 223.4M378.0 289.3L377.9 287.7M367.3 294.2L375.6 295.4M352.1 308.2L357.2 316.8M335.2 288.9L334.6 295.3M371.9 262.1L376.2 265.1M320.0 285.3L326.9 294.5M350.0 300.2L345.5 305.3M355.4 262.1L365.6 263.2M365.6 263.2L371.9 262.1M334.6 295.3L337.9 305.6M350.8 251.2L360.0 254.6M369.7 230.0L373.6 229.6M371.9 262.1L376.8 273.7M326.7 232.2L331.9 240.5M331.9 240.5L330.1 248.1M354.0 228.4L362.4 230.6M364.4 303.1L359.8 309.2M326.2 255.7L329.5 263.9M342.8 219.3L347.9 219.8M347.9 219.8L358.3 220.7M373.6 229.6L372.9 239.0M330.7 301.7L333.8 310.9M360.0 254.6L367.2 254.6M372.0 303.0L369.5 312.4M323.3 299.3L319.5 307.2M358.3 220.7L354.0 228.4M373.7 321.1L379.4 322.5M356.6 299.9L359.8 309.2M355.4 262.1L355.0 267.9M337.0 250.5L344.2 250.7M372.9 222.0L373.0 222.0M338.3 280.3L335.2 288.9M342.2 258.7L345.5 267.3M355.8 285.8L352.9 292.2M369.1 271.1L364.9 277.0M363.9 285.1L371.6 288.9M330.1 248.1L326.2 255.7M315.8 262.0L321.8 262.2M348.1 260.9L355.0 267.9M337.0 250.5L333.3 257.8M372.9 222.0L369.7 230.0M352.1 308.2L359.8 309.2M310.9 269.8L316.2 277.4M366.1 221.4L369.7 230.0M309.4 275.5L309.8 281.5M343.6 236.3L339.5 241.8M350.1 277.3L357.2 276.8M303.3 222.5L307.2 223.4M338.7 225.7L335.4 235.5M306.5 251.9L308.4 261.1M347.9 219.8L344.7 226.0M375.6 295.4L372.0 303.0M310.6 289.1L314.5 299.8M323.3 226.1L329.9 227.4M337.9 305.6L345.5 305.3M316.6 224.7L311.4 230.6M359.9 294.1L356.6 299.9M367.3 294.2L364.4 303.1M315.8 262.0L310.9 269.8M369.9 247.1L367.2 254.6M358.7 237.1L355.9 243.8M337.9 305.6L343.4 313.3M379.3 306.4L379.9 314.5M319.0 217.2L325.1 217.7M312.5 245.5L319.4 255.1M365.6 263.2L362.8 269.8M325.1 217.7L333.2 218.4M366.1 239.1L364.3 245.2M364.4 303.1L369.5 312.4M369.5 312.4L375.7 313.0M367.2 254.6L374.1 256.2M349.7 236.7L355.9 243.8M359.8 309.2L369.5 312.4M326.2 255.7L321.8 262.2M376.8 273.7L377.3 279.5M378.0 289.3L375.6 295.4M379.9 314.5L379.4 322.5M321.8 262.2L319.8 270.0M374.7 281.7L377.3 279.5M339.5 241.8L349.0 242.6M310.3 254.1L308.4 261.1M309.4 275.5L316.2 277.4M372.9 239.0L375.0 248.4M357.2 276.8L364.9 277.0M306.5 251.9L310.3 254.1M302.9 215.7L311.6 216.5M329.5 263.9L335.8 274.1M345.5 267.3L355.0 267.9M369.7 230.0L372.9 239.0M326.8 272.8L335.8 274.1M308.4 261.1L310.9 269.8M372.0 303.0L375.7 313.0M365.6 263.2L369.1 271.1M302.9 215.7L303.3 222.5M343.6 236.3L349.7 236.7M323.3 226.1L326.7 232.2M321.8 262.2L326.8 272.8M325.0 241.1L331.9 240.5M307.2 223.4L304.6 229.8M352.1 308.2L350.5 315.1M359.8 309.2L357.2 316.8M374.1 256.2L375.5 255.2M350.0 300.2L356.6 299.9M335.4 235.5L343.6 236.3M310.3 238.5L317.0 240.0M356.6 299.9L364.4 303.1M348.2 283.0L352.9 292.2M350.1 277.3L348.2 283.0M311.4 230.6L320.6 231.1M369.5 312.4L373.7 321.1M340.2 298.0L337.9 305.6M367.2 254.6L365.6 263.2M331.9 240.5L339.5 241.8M374.1 256.2L371.9 262.1M335.4 235.5L331.9 240.5M317.0 240.0L325.0 241.1M345.6 290.0L352.9 292.2M330.7 301.7L327.4 309.2M331.9 240.5L337.0 250.5M334.6 295.3L340.2 298.0M375.7 313.0L379.4 322.5M345.5 305.3L350.5 315.1M359.9 294.1L364.4 303.1M358.7 237.1L364.3 245.2M350.1 277.3L355.8 285.8M333.3 257.8L329.5 263.9M304.6 229.8L310.3 238.5M312.7 282.8L317.1 291.4M319.4 255.1L321.8 262.2M303.3 222.5L304.6 229.8M344.2 250.7L342.2 258.7M355.9 243.8L360.0 254.6M335.2 288.9L340.2 298.0M317.1 291.4L314.5 299.8M362.4 230.6L369.7 230.0M310.3 238.5L312.5 245.5M356.6 299.9L352.1 308.2M340.2 298.0L350.0 300.2M326.9 294.5L334.6 295.3M319.8 270.0L316.2 277.4M362.8 269.8L357.2 276.8M339.5 241.8L337.0 250.5M320.6 231.1L326.7 232.2M354.0 228.4L349.7 236.7M371.6 288.9L378.0 289.3M314.5 299.8L312.4 305.4M355.0 267.9L362.8 269.8M344.2 250.7L348.1 260.9M358.3 220.7L366.1 221.4M316.2 277.4L320.0 285.3M350.8 251.2L355.4 262.1M366.1 221.4L372.9 222.0M375.7 313.0L379.9 314.5M326.8 272.8L324.5 279.9M323.3 226.1L320.6 231.1M325.1 217.7L323.3 226.1M362.4 230.6L358.7 237.1M310.9 269.8L309.4 275.5M338.3 280.3L345.6 290.0M347.9 219.8L354.0 228.4M319.5 307.2L327.4 309.2M324.5 279.9L328.0 287.1M360.0 254.6L365.6 263.2M332.5 280.5L335.2 288.9M312.7 282.8L320.0 285.3M369.9 247.1L375.0 248.4M369.1 271.1L374.7 281.7M374.7 281.7L378.0 289.3M335.2 288.9L345.6 290.0M310.3 254.1L319.4 255.1M326.8 272.8L332.5 280.5M320.0 285.3L328.0 287.1M369.9 247.1L374.1 256.2M311.6 298.6L314.5 299.8M362.4 230.6L366.1 239.1M328.0 287.1L335.2 288.9M364.9 277.0L374.7 281.7M338.7 225.7L343.6 236.3M321.8 262.2L329.5 263.9M339.6 265.6L345.5 267.3M311.6 298.6L312.4 305.4M352.9 292.2L356.6 299.9M371.6 288.9L367.3 294.2M306.1 246.8L312.5 245.5M311.6 216.5L316.6 224.7M312.5 245.5L321.6 249.2M364.3 245.2L369.9 247.1M355.0 267.9L350.1 277.3M339.6 265.6L335.8 274.1M345.6 290.0L340.2 298.0M321.6 249.2L319.4 255.1M311.4 230.6L310.3 238.5M306.1 246.8L306.5 251.9M349.7 236.7L349.0 242.6M349.0 242.6L355.9 243.8M307.2 223.4L316.6 224.7M316.6 224.7L320.6 231.1M317.1 291.4L323.3 299.3M379.3 306.4L375.7 313.0M323.3 299.3L327.4 309.2M372.9 239.0L369.9 247.1M329.9 227.4L326.7 232.2M362.8 269.8L364.9 277.0M355.8 285.8L359.9 294.1M319.8 270.0L324.5 279.9M310.3 254.1L315.8 262.0M321.6 249.2L326.2 255.7M371.9 262.1L369.1 271.1M348.2 283.0L345.6 290.0M330.1 248.1L333.3 257.8M369.5 312.4L364.1 318.6M366.1 239.1L369.9 247.1M349.0 242.6L344.2 250.7M378.0 289.3L378.7 299.1M319.0 217.2L323.3 226.1M325.1 217.7L329.9 227.4M352.9 292.2L359.9 294.1M308.4 269.2L310.9 269.8M310.6 289.1L311.6 298.6M375.6 295.4L378.7 299.1M304.9 237.1L310.3 238.5M308.4 269.2L309.4 275.5M357.2 276.8L355.8 285.8M349.7 236.7L358.7 237.1M345.5 267.3L350.1 277.3M375.0 248.4L374.1 256.2M342.8 219.3L344.7 226.0M349.0 242.6L350.8 251.2M377.3 279.5L378.0 289.3M379.3 306.4L379.3 307.0M333.2 218.4L338.7 225.7M325.0 241.1L321.6 249.2M375.6 295.4L379.3 306.4M364.4 303.1L372.0 303.0M304.9 237.1L306.1 246.8M372.9 239.0L374.2 238.4M355.9 243.8L364.3 245.2M366.1 221.4L362.4 230.6" stroke="#34347e" stroke-width="0.5" stroke-opacity="0.9" fill="none"/><path d="M302.9 215.7h0M311.6 216.5h0M319.0 217.2h0M325.1 217.7h0M333.2 218.4h0M342.8 219.3h0M347.9 219.8h0M358.3 220.7h0M366.1 221.4h0M372.9 222.0h0M373.0 222.0h0M303.3 222.5h0M307.2 223.4h0M316.6 224.7h0M323.3 226.1h0M329.9 227.4h0M338.7 225.7h0M344.7 226.0h0M354.0 228.4h0M362.4 230.6h0M369.7 230.0h0M373.6 229.6h0M304.6 229.8h0M311.4 230.6h0M320.6 231.1h0M326.7 232.2h0M335.4 235.5h0M343.6 236.3h0M349.7 236.7h0M358.7 237.1h0M366.1 239.1h0M372.9 239.0h0M374.2 238.4h0M304.9 237.1h0M310.3 238.5h0M317.0 240.0h0M325.0 241.1h0M331.9 240.5h0M339.5 241.8h0M349.0 242.6h0M355.9 243.8h0M364.3 245.2h0M369.9 247.1h0M375.0 248.4h0M306.1 246.8h0M312.5 245.5h0M321.6 249.2h0M330.1 248.1h0M337.0 250.5h0M344.2 250.7h0M350.8 251.2h0M360.0 254.6h0M367.2 254.6h0M374.1 256.2h0M375.5 255.2h0M306.5 251.9h0M310.3 254.1h0M319.4 255.1h0M326.2 255.7h0M333.3 257.8h0M342.2 258.7h0M348.1 260.9h0M355.4 262.1h0M365.6 263.2h0M371.9 262.1h0M376.2 265.1h0M308.4 261.1h0M315.8 262.0h0M321.8 262.2h0M329.5 263.9h0M339.6 265.6h0M345.5 267.3h0M355.0 267.9h0M362.8 269.8h0M369.1 271.1h0M376.8 273.7h0M376.8 272.7h0M308.4 269.2h0M310.9 269.8h0M319.8 270.0h0M326.8 272.8h0M335.8 274.1h0M343.3 275.2h0M350.1 277.3h0M357.2 276.8h0M364.9 277.0h0M374.7 281.7h0M377.3 279.5h0M309.4 275.5h0M316.2 277.4h0M324.5 279.9h0M332.5 280.5h0M338.3 280.3h0M348.2 283.0h0M355.8 285.8h0M363.9 285.1h0M371.6 288.9h0M378.0 289.3h0M377.9 287.7h0M309.8 281.5h0M312.7 282.8h0M320.0 285.3h0M328.0 287.1h0M335.2 288.9h0M345.6 290.0h0M352.9 292.2h0M359.9 294.1h0M367.3 294.2h0M375.6 295.4h0M378.7 299.1h0M310.6 289.1h0M317.1 291.4h0M326.9 294.5h0M334.6 295.3h0M340.2 298.0h0M350.0 300.2h0M356.6 299.9h0M364.4 303.1h0M372.0 303.0h0M379.3 306.4h0M379.3 307.0h0M311.6 298.6h0M314.5 299.8h0M323.3 299.3h0M330.7 301.7h0M337.9 305.6h0M345.5 305.3h0M352.1 308.2h0M359.8 309.2h0M369.5 312.4h0M375.7 313.0h0M379.9 314.5h0M312.4 305.4h0M319.5 307.2h0M327.4 309.2h0M333.8 310.9h0M343.4 313.3h0M350.5 315.1h0M357.2 316.8h0M364.1 318.6h0M373.7 321.1h0M379.4 322.5h0M380.5 322.8h0" stroke="#2a2a9a" stroke-width="1.25" stroke-linecap="round" stroke-opacity="0.8" fill="none"/></g>
<g><path d="M431.4 221.3L438.0 221.0M388.9 293.2L386.6 302.8M425.6 299.4L434.4 294.9M440.1 276.2L440.5 278.4M432.3 267.1L436.7 271.7M384.5 268.5L389.4 277.4M436.2 258.1L432.3 267.1M397.3 232.8L407.2 230.3M438.7 264.4L440.2 271.2M411.7 252.0L420.3 248.2M399.6 262.4L406.7 261.5M375.9 239.1L374.8 246.8M413.8 265.1L418.1 270.9M426.4 247.6L432.4 252.6M393.8 243.1L398.6 247.4M383.5 237.7L387.6 242.1M387.6 242.1L382.1 254.3M420.3 248.2L426.4 247.6M429.6 275.1L436.7 271.7M379.3 306.5L386.6 302.8M397.0 289.7L403.0 294.8M414.6 212.1L408.9 222.0M417.4 303.7L425.6 299.4M436.2 258.1L438.7 264.4M392.6 283.6L388.9 293.2M430.6 236.9L426.4 247.6M408.0 300.3L402.6 311.4M403.7 253.7L406.7 261.5M416.6 240.8L424.4 240.8M418.0 218.2L414.2 228.2M418.1 270.9L424.2 269.7M382.1 254.3L380.1 263.8M378.3 227.8L383.5 237.7M403.0 294.8L398.2 304.7M390.5 217.8L386.8 227.9M430.6 290.8L434.4 294.9M375.9 239.1L383.5 237.7M399.6 262.4L398.2 272.0M404.6 268.9L402.1 279.3M421.6 279.3L417.2 289.3M407.1 246.0L411.7 252.0M438.1 214.5L438.0 221.0M384.0 313.0L386.8 319.6M410.7 307.2L417.4 303.7M428.9 259.7L432.3 267.1M437.6 234.5L439.2 243.3M415.8 257.0L413.8 265.1M418.0 218.2L427.3 217.2M378.6 288.7L382.9 295.6M413.9 297.2L421.9 293.3M428.7 208.8L433.0 213.9M403.7 253.7L411.7 252.0M373.0 222.0L378.3 227.8M386.8 227.9L393.4 225.8M388.4 258.7L395.9 256.3M394.2 299.8L390.3 309.0M413.8 265.1L421.2 263.7M401.8 221.7L408.9 222.0M378.7 299.1L382.9 295.6M395.9 256.3L403.7 253.7M378.6 247.5L375.6 257.0M387.6 242.1L389.9 250.8M411.7 252.0L406.7 261.5M385.3 287.3L392.6 283.6M409.4 291.9L413.9 297.2M396.7 314.4L402.6 311.4M402.6 311.4L410.7 307.2M388.4 258.7L384.5 268.5M394.2 299.8L398.2 304.7M417.2 289.3L421.9 293.3M440.8 285.5L441.0 291.5M397.0 289.7L394.2 299.8M384.0 313.0L390.3 309.0M409.6 274.6L418.1 270.9M389.9 250.8L398.6 247.4M434.5 229.3L430.6 236.9M406.7 261.5L413.8 265.1M392.6 283.6L402.1 279.3M424.6 255.7L428.9 259.7M402.1 279.3L409.6 274.6M418.0 218.2L422.0 225.0M397.3 232.8L393.8 243.1M427.3 217.2L431.4 221.3M380.3 280.5L389.4 277.4M375.6 257.0L380.1 263.8M378.2 270.9L377.3 280.1M382.9 295.6L379.3 306.5M381.1 322.5L386.8 319.6M390.3 309.0L398.2 304.7M425.6 230.6L424.4 240.8M404.6 268.9L413.8 265.1M389.4 277.4L398.2 272.0M379.7 220.4L390.5 217.8M436.7 271.7L440.1 276.2M434.5 229.3L437.6 234.5M404.6 268.9L409.6 274.6M401.8 221.7L407.2 230.3M432.3 267.1L429.6 275.1M404.8 214.4L414.6 212.1M420.3 248.2L415.8 257.0M385.3 287.3L382.9 295.6M408.9 222.0L418.0 218.2M424.4 240.8L420.3 248.2M390.0 235.3L387.6 242.1M404.8 214.4L401.8 221.7M409.6 238.0L416.6 240.8M414.2 228.2L420.2 232.2M398.2 304.7L408.0 300.3M402.1 279.3L397.0 289.7M386.6 302.8L394.2 299.8M378.2 270.9L384.5 268.5M413.1 281.4L417.2 289.3M439.7 257.4L438.7 264.4M413.9 297.2L410.7 307.2M438.0 221.0L438.3 220.9M432.4 252.6L439.4 249.6M407.2 230.3L409.6 238.0M424.2 269.7L432.3 267.1M439.4 249.6L439.4 249.6M398.6 247.4L407.1 246.0M434.4 294.9L441.0 291.5M390.0 235.3L393.8 243.1M413.8 265.1L409.6 274.6M379.7 220.4L378.3 227.8M436.7 271.7L440.2 271.2M421.9 293.3L425.6 299.4M406.7 284.2L403.0 294.8M388.9 293.2L394.2 299.8M417.2 289.3L413.9 297.2M426.4 247.6L433.9 242.7M433.9 242.7L439.2 243.3M403.0 294.8L408.0 300.3M424.4 240.8L430.6 236.9M397.3 232.8L403.8 239.1M403.8 239.1L398.6 247.4M427.3 217.2L433.0 213.9M433.5 280.5L430.6 290.8M395.9 256.3L399.6 262.4M414.6 212.1L422.0 210.4M422.0 210.4L428.7 208.8M398.2 304.7L402.6 311.4M430.6 236.9L437.6 234.5M440.1 276.2L436.2 286.3M390.3 309.0L386.8 319.6M428.7 208.8L427.3 217.2M426.1 285.1L430.6 290.8M426.4 247.6L424.6 255.7M407.1 246.0L416.6 240.8M409.6 274.6L406.7 284.2M411.7 252.0L415.8 257.0M424.2 269.7L421.6 279.3M439.4 249.6L436.2 258.1M432.3 267.1L438.7 264.4M398.6 247.4L395.9 256.3M384.5 268.5L393.7 266.1M420.3 248.2L424.6 255.7M407.1 246.0L403.7 253.7M421.9 293.3L430.6 290.8M380.3 280.5L385.3 287.3M437.6 206.7L438.1 214.5M378.6 288.7L378.7 299.1M414.2 228.2L409.6 238.0M421.2 263.7L428.9 259.7M373.6 230.0L378.3 227.8M408.9 222.0L407.2 230.3M376.0 262.7L378.2 270.9M422.0 210.4L418.0 218.2M440.2 271.2L440.1 276.2M379.3 306.5L384.0 313.0M393.4 225.8L401.8 221.7M408.0 300.3L413.9 297.2M386.8 227.9L383.5 237.7M429.6 275.1L426.1 285.1M436.7 271.7L433.5 280.5M384.5 268.5L380.3 280.5M438.6 228.5L437.6 234.5M431.4 221.3L425.6 230.6M408.0 300.3L410.7 307.2M390.5 217.8L396.6 216.4M382.1 254.3L388.4 258.7M433.9 242.7L432.4 252.6M396.6 216.4L404.8 214.4M438.0 221.0L434.5 229.3M433.5 280.5L436.2 286.3M436.2 286.3L440.8 285.5M437.6 234.5L438.8 233.6M422.0 225.0L425.6 230.6M430.6 290.8L436.2 286.3M395.9 256.3L393.7 266.1M393.7 266.1L389.4 277.4M409.6 238.0L420.2 232.2M380.1 263.8L378.2 270.9M378.6 288.7L385.3 287.3M428.9 259.7L436.2 258.1M376.0 262.7L380.1 263.8M373.0 222.0L379.7 220.4M399.6 262.4L404.6 268.9M415.8 257.0L424.6 255.7M440.1 276.2L440.8 285.5M398.2 272.0L404.6 268.9M378.2 270.9L380.3 280.5M433.9 242.7L439.4 249.6M414.2 228.2L422.0 225.0M393.4 225.8L397.3 232.8M393.7 266.1L398.2 272.0M393.8 243.1L403.8 239.1M378.3 227.8L375.9 239.1M421.9 293.3L417.4 303.7M430.6 290.8L425.6 299.4M417.2 289.3L426.1 285.1M407.2 230.3L414.2 228.2M378.6 247.5L387.6 242.1M426.1 285.1L433.5 280.5M418.1 270.9L421.6 279.3M421.2 263.7L418.1 270.9M383.5 237.7L390.0 235.3M436.2 286.3L441.0 291.5M409.4 291.9L408.0 300.3M437.6 234.5L433.9 242.7M403.8 239.1L409.6 238.0M407.2 230.3L403.8 239.1M387.6 242.1L393.8 243.1M413.1 281.4L421.6 279.3M398.2 304.7L396.7 314.4M403.8 239.1L407.1 246.0M403.0 294.8L409.4 291.9M413.9 297.2L417.4 303.7M429.6 275.1L433.5 280.5M431.4 221.3L434.5 229.3M421.2 263.7L424.2 269.7M403.7 253.7L399.6 262.4M375.9 239.1L378.6 247.5M382.9 295.6L386.6 302.8M388.4 258.7L393.7 266.1M373.6 230.0L375.9 239.1M416.6 240.8L411.7 252.0M425.6 230.6L430.6 236.9M406.7 284.2L409.4 291.9M386.6 302.8L384.0 313.0M433.0 213.9L438.1 214.5M378.6 247.5L382.1 254.3M426.1 285.1L421.9 293.3M409.4 291.9L417.2 289.3M394.2 299.8L403.0 294.8M389.4 277.4L385.3 287.3M432.4 252.6L428.9 259.7M409.6 238.0L407.1 246.0M390.0 235.3L397.3 232.8M427.3 217.2L422.0 225.0M438.7 264.4L439.9 263.4M384.0 313.0L381.1 322.5M424.6 255.7L432.4 252.6M416.6 240.8L420.3 248.2M428.7 208.8L437.6 206.7M385.3 287.3L388.9 293.2M424.4 240.8L426.4 247.6M437.6 206.7L437.8 206.6M398.2 272.0L392.6 283.6M393.4 225.8L390.0 235.3M396.6 216.4L393.4 225.8M433.0 213.9L431.4 221.3M380.3 280.5L378.6 288.7M409.6 274.6L413.1 281.4M422.0 210.4L427.3 217.2M386.8 319.6L396.7 314.4M392.6 283.6L397.0 289.7M430.6 236.9L433.9 242.7M402.1 279.3L406.7 284.2M382.9 295.6L388.9 293.2M439.4 249.6L439.7 257.4M406.7 284.2L413.1 281.4M380.1 263.8L388.4 258.7M398.2 272.0L402.1 279.3M388.9 293.2L397.0 289.7M379.9 314.6L384.0 313.0M433.0 213.9L438.0 221.0M397.0 289.7L406.7 284.2M436.2 258.1L439.7 257.4M408.9 222.0L414.2 228.2M393.7 266.1L399.6 262.4M406.7 261.5L415.8 257.0M379.9 314.6L381.1 322.5M421.6 279.3L426.1 285.1M438.7 264.4L436.7 271.7M375.6 257.0L382.1 254.3M379.7 220.4L386.8 227.9M382.1 254.3L389.9 250.8M434.5 229.3L438.6 228.5M424.6 255.7L421.2 263.7M406.7 261.5L404.6 268.9M413.1 281.4L409.4 291.9M389.9 250.8L388.4 258.7M383.5 237.7L378.6 247.5M422.0 225.0L420.2 232.2M420.2 232.2L425.6 230.6M378.3 227.8L386.8 227.9M386.8 227.9L390.0 235.3M386.6 302.8L390.3 309.0M390.3 309.0L396.7 314.4M401.8 221.7L397.3 232.8M432.4 252.6L436.2 258.1M424.2 269.7L429.6 275.1M389.4 277.4L392.6 283.6M380.1 263.8L384.5 268.5M389.9 250.8L395.9 256.3M439.2 243.3L439.4 249.6M418.1 270.9L413.1 281.4M398.6 247.4L403.7 253.7M436.2 286.3L434.4 294.9M438.0 221.0L438.6 228.5M420.2 232.2L416.6 240.8M390.5 217.8L393.4 225.8M396.6 216.4L401.8 221.7M421.6 279.3L429.6 275.1M377.3 280.1L380.3 280.5M374.8 246.8L378.6 247.5M377.3 280.1L378.6 288.7M428.9 259.7L424.2 269.7M422.0 225.0L431.4 221.3M415.8 257.0L421.2 263.7M414.6 212.1L418.0 218.2M420.2 232.2L424.4 240.8M404.8 214.4L408.9 222.0M393.8 243.1L389.9 250.8M433.5 280.5L440.1 276.2M425.6 230.6L434.5 229.3M437.6 206.7L433.0 213.9" stroke="#34347e" stroke-width="0.5" stroke-opacity="0.9" fill="none"/><path d="M373.0 222.0h0M379.7 220.4h0M390.5 217.8h0M396.6 216.4h0M404.8 214.4h0M414.6 212.1h0M422.0 210.4h0M428.7 208.8h0M437.6 206.7h0M437.8 206.6h0M373.6 230.0h0M378.3 227.8h0M386.8 227.9h0M393.4 225.8h0M401.8 221.7h0M408.9 222.0h0M418.0 218.2h0M427.3 217.2h0M433.0 213.9h0M438.1 214.5h0M375.9 239.1h0M383.5 237.7h0M390.0 235.3h0M397.3 232.8h0M407.2 230.3h0M414.2 228.2h0M422.0 225.0h0M431.4 221.3h0M438.0 221.0h0M438.3 220.9h0M374.8 246.8h0M378.6 247.5h0M387.6 242.1h0M393.8 243.1h0M403.8 239.1h0M409.6 238.0h0M420.2 232.2h0M425.6 230.6h0M434.5 229.3h0M438.6 228.5h0M375.6 257.0h0M382.1 254.3h0M389.9 250.8h0M398.6 247.4h0M407.1 246.0h0M416.6 240.8h0M424.4 240.8h0M430.6 236.9h0M437.6 234.5h0M438.8 233.6h0M376.0 262.7h0M380.1 263.8h0M388.4 258.7h0M395.9 256.3h0M403.7 253.7h0M411.7 252.0h0M420.3 248.2h0M426.4 247.6h0M433.9 242.7h0M439.2 243.3h0M378.2 270.9h0M384.5 268.5h0M393.7 266.1h0M399.6 262.4h0M406.7 261.5h0M415.8 257.0h0M424.6 255.7h0M432.4 252.6h0M439.4 249.6h0M377.3 280.1h0M380.3 280.5h0M389.4 277.4h0M398.2 272.0h0M404.6 268.9h0M413.8 265.1h0M421.2 263.7h0M428.9 259.7h0M436.2 258.1h0M439.7 257.4h0M378.6 288.7h0M385.3 287.3h0M392.6 283.6h0M402.1 279.3h0M409.6 274.6h0M418.1 270.9h0M424.2 269.7h0M432.3 267.1h0M438.7 264.4h0M439.9 263.4h0M378.7 299.1h0M382.9 295.6h0M388.9 293.2h0M397.0 289.7h0M406.7 284.2h0M413.1 281.4h0M421.6 279.3h0M429.6 275.1h0M436.7 271.7h0M440.2 271.2h0M379.3 306.5h0M386.6 302.8h0M394.2 299.8h0M403.0 294.8h0M409.4 291.9h0M417.2 289.3h0M426.1 285.1h0M433.5 280.5h0M440.1 276.2h0M440.5 278.4h0M379.9 314.6h0M384.0 313.0h0M390.3 309.0h0M398.2 304.7h0M408.0 300.3h0M413.9 297.2h0M421.9 293.3h0M430.6 290.8h0M436.2 286.3h0M440.8 285.5h0M381.1 322.5h0M386.8 319.6h0M396.7 314.4h0M402.6 311.4h0M410.7 307.2h0M417.4 303.7h0M425.6 299.4h0M434.4 294.9h0M441.0 291.5h0" stroke="#2a2a9a" stroke-width="1.25" stroke-linecap="round" stroke-opacity="0.8" fill="none"/></g>
<g><path d="M374.2 210.7L380.5 212.0M363.3 209.3L369.0 208.0M361.5 221.0L373.0 222.0M418.8 207.8L424.3 206.1M413.1 209.1L426.5 209.3M336.2 208.2L342.5 210.1M409.5 206.3L424.3 206.1M368.0 201.2L369.0 201.0M360.9 212.9L373.5 214.9M337.0 215.2L340.0 214.1M350.4 208.6L356.8 210.4M340.0 214.1L346.0 212.8M405.3 214.3L410.2 213.2M307.9 214.5L313.3 213.3M385.3 215.0L392.2 213.9M378.2 213.8L392.2 213.9M379.8 209.5L394.9 209.8M341.9 207.0L345.9 206.1M328.4 213.6L333.2 212.1M374.5 203.9L385.8 204.1M380.5 212.0L396.4 212.5M426.1 205.6L437.8 206.6M345.9 206.1L352.9 204.6M358.6 203.3L367.9 205.1M321.3 214.8L330.7 216.7M389.0 206.9L405.5 207.5M363.3 202.3L378.9 202.5M388.7 218.3L393.9 217.0M328.4 213.6L337.0 215.2M324.9 217.7L338.5 218.9M333.2 212.1L346.0 212.8M396.4 212.5L410.2 213.2M319.2 212.0L328.4 213.6M354.4 215.7L367.4 216.4M415.5 205.0L424.3 206.1M355.9 207.7L363.3 209.3M324.0 210.9L329.8 209.7M330.7 216.7L346.6 217.2M346.6 217.2L352.5 218.6M392.2 213.9L396.4 212.5M386.6 208.3L394.9 209.8M336.2 208.2L350.4 208.6M392.2 213.9L399.1 215.8M363.3 202.3L374.5 203.9M393.5 205.4L409.5 206.3M363.3 209.3L374.2 210.7M337.7 211.2L342.5 210.1M380.5 212.0L392.2 213.9M385.8 204.1L401.4 204.5M385.7 211.1L402.6 211.5M418.8 207.8L426.5 209.3M358.6 203.3L363.3 202.3M313.3 213.3L319.2 212.0M337.0 215.2L346.6 217.2M324.0 210.9L333.2 212.1M386.6 208.3L389.0 206.9M352.5 218.6L370.9 219.1M409.5 206.3L415.5 205.0M319.2 212.0L324.0 210.9M329.8 209.7L337.7 211.2M369.0 208.0L379.8 209.5M360.9 212.9L378.2 213.8M402.6 211.5L410.2 213.2M354.6 212.0L370.8 211.9M393.5 205.4L401.4 204.5M394.9 209.8L396.7 208.5M356.8 210.4L374.2 210.7M385.7 211.1L396.4 212.5M393.5 205.4L405.5 207.5M374.2 217.6L383.2 219.6M380.8 216.3L393.9 217.0M378.2 213.8L380.5 212.0M361.5 220.3L370.9 219.1M373.0 222.0L377.5 220.9M360.9 212.9L370.8 211.9M361.5 220.3L373.0 222.0M386.6 208.3L396.7 208.5M415.5 205.0L426.1 205.6M342.5 210.1L354.6 212.0M355.9 207.7L369.0 208.0M352.5 218.6L361.5 220.3M375.0 206.4L389.0 206.9M369.0 208.0L375.0 206.4M361.5 221.0L361.5 220.3M396.7 208.5L413.1 209.1M303.1 215.6L307.9 214.5M316.7 216.0L330.7 216.7M337.7 211.2L354.6 212.0M367.9 205.1L379.7 205.2M405.5 207.5L418.8 207.8M383.2 219.6L388.7 218.3M393.9 217.0L399.1 215.8M410.2 213.2L416.7 211.6M346.0 212.8L360.9 212.9M424.3 206.1L426.1 205.6M399.1 215.8L405.3 214.3M416.7 211.6L422.5 210.2M313.3 213.3L321.3 214.8M368.0 201.2L381.6 202.0M359.1 206.2L375.0 206.4M385.8 204.1L392.6 203.2M367.4 216.4L373.5 214.9M337.0 215.2L354.4 215.7M402.6 211.5L416.7 211.6M374.5 203.9L378.9 202.5M348.7 219.8L352.5 218.6M307.9 214.5L321.3 214.8M352.5 218.6L359.4 217.3M379.8 209.5L386.6 208.3M307.9 214.5L316.7 216.0M303.1 215.6L313.1 216.6M324.9 217.7L330.7 216.7M401.4 204.5L409.5 206.3M354.6 212.0L356.8 210.4M328.4 213.6L340.0 214.1M378.9 202.5L385.8 204.1M378.9 202.5L381.6 202.0M392.6 203.2L401.4 204.5M405.5 207.5L413.1 209.1M368.0 201.2L378.9 202.5M359.4 217.3L370.9 219.1M406.2 209.7L413.1 209.1M354.4 215.7L354.7 214.4M379.7 205.2L393.5 205.4M316.7 216.0L324.9 217.7M373.5 214.9L385.3 215.0M359.1 206.2L369.0 208.0M330.7 216.7L341.5 218.2M352.9 204.6L367.9 205.1M348.7 219.8L361.5 221.0M396.4 212.5L402.6 211.5M356.8 210.4L370.8 211.9M402.6 211.5L406.2 209.7M394.9 209.8L406.2 209.7M370.8 211.9L374.2 210.7M426.5 209.3L432.6 207.8M316.7 216.0L321.3 214.8M342.5 210.1L350.4 208.6M359.1 206.2L367.9 205.1M380.5 212.0L385.7 211.1M396.7 208.5L405.5 207.5M406.2 209.7L422.5 210.2M321.3 214.8L337.0 215.2M363.3 202.3L368.0 201.2M385.8 204.1L393.5 205.4M346.0 212.8L354.6 212.0M341.5 218.2L346.6 217.2M340.0 214.1L354.7 214.4M354.7 214.4L367.4 216.4M432.6 207.8L437.8 206.6M350.4 208.6L355.9 207.7M341.9 207.0L355.9 207.7M374.5 203.9L379.7 205.2M330.7 216.7L337.0 215.2M418.8 207.8L432.6 207.8M380.8 216.3L385.3 215.0M375.0 206.4L386.6 208.3M374.2 217.6L388.7 218.3M329.8 209.7L336.2 208.2M394.9 209.8L402.6 211.5M303.1 215.6L316.7 216.0M333.2 212.1L340.0 214.1M401.4 204.5L415.5 205.0M336.2 208.2L341.9 207.0M321.3 214.8L328.4 213.6M413.1 209.1L418.8 207.8M392.6 203.2L405.0 203.9M354.7 214.4L360.9 212.9M396.7 208.5L406.2 209.7M367.9 205.1L375.0 206.4M370.9 219.1L374.2 217.6M361.5 220.3L377.5 220.9M359.4 217.3L374.2 217.6M385.7 211.1L394.9 209.8M406.2 209.7L416.7 211.6M346.0 212.8L354.7 214.4M367.4 216.4L380.8 216.3M341.9 207.0L350.4 208.6M346.6 217.2L354.4 215.7M333.2 212.1L337.7 211.2M381.6 202.0L392.6 203.2M373.5 214.9L378.2 213.8M396.4 212.5L405.3 214.3M352.9 204.6L358.6 203.3M369.0 208.0L386.6 208.3M401.4 204.5L405.0 203.9M389.0 206.9L393.5 205.4M370.8 211.9L378.2 213.8M385.3 215.0L399.1 215.8M374.2 217.6L380.8 216.3M354.7 214.4L373.5 214.9M313.3 213.3L328.4 213.6M405.0 203.9L415.5 205.0M422.5 210.2L426.5 209.3M319.2 212.0L333.2 212.1M341.5 218.2L348.7 219.8M367.4 216.4L374.2 217.6M346.6 217.2L359.4 217.3M377.5 220.9L383.2 219.6M392.2 213.9L405.3 214.3M424.3 206.1L432.6 207.8M363.3 209.3L379.8 209.5M373.5 214.9L380.8 216.3M352.9 204.6L359.1 206.2M385.3 215.0L393.9 217.0M380.8 216.3L388.7 218.3M378.9 202.5L392.6 203.2M324.9 217.7L341.5 218.2M413.1 209.1L422.5 210.2M409.5 206.3L418.8 207.8M370.9 219.1L383.2 219.6M405.5 207.5L409.5 206.3M313.1 216.6L324.9 217.7M370.9 219.1L377.5 220.9M379.7 205.2L389.0 206.9M392.6 203.2L393.9 203.0M338.5 218.9L341.5 218.2M359.4 217.3L367.4 216.4M345.9 206.1L359.1 206.2M378.2 213.8L385.3 215.0M379.8 209.5L385.7 211.1M354.6 212.0L360.9 212.9M356.8 210.4L363.3 209.3M374.2 210.7L385.7 211.1M389.0 206.9L396.7 208.5M329.8 209.7L342.5 210.1M313.1 216.6L316.7 216.0M370.8 211.9L380.5 212.0M337.7 211.2L346.0 212.8M324.0 210.9L337.7 211.2M342.5 210.1L356.8 210.4M354.4 215.7L359.4 217.3M355.9 207.7L359.1 206.2M340.0 214.1L354.4 215.7M350.4 208.6L363.3 209.3M415.5 205.0L414.9 204.7M348.7 219.8L361.5 220.3M341.5 218.2L352.5 218.6M379.7 205.2L385.8 204.1M375.0 206.4L379.7 205.2M338.5 218.9L348.7 219.8M374.2 210.7L379.8 209.5M424.3 206.1L437.8 206.6M345.9 206.1L355.9 207.7M367.9 205.1L374.5 203.9M358.6 203.3L374.5 203.9" stroke="#34347e" stroke-width="0.45" stroke-opacity="0.7" fill="none"/><path d="M303.1 215.6h0M307.9 214.5h0M313.3 213.3h0M319.2 212.0h0M324.0 210.9h0M329.8 209.7h0M336.2 208.2h0M341.9 207.0h0M345.9 206.1h0M352.9 204.6h0M358.6 203.3h0M363.3 202.3h0M368.0 201.2h0M369.0 201.0h0M313.1 216.6h0M316.7 216.0h0M321.3 214.8h0M328.4 213.6h0M333.2 212.1h0M337.7 211.2h0M342.5 210.1h0M350.4 208.6h0M355.9 207.7h0M359.1 206.2h0M367.9 205.1h0M374.5 203.9h0M378.9 202.5h0M381.6 202.0h0M324.9 217.7h0M330.7 216.7h0M337.0 215.2h0M340.0 214.1h0M346.0 212.8h0M354.6 212.0h0M356.8 210.4h0M363.3 209.3h0M369.0 208.0h0M375.0 206.4h0M379.7 205.2h0M385.8 204.1h0M392.6 203.2h0M393.9 203.0h0M338.5 218.9h0M341.5 218.2h0M346.6 217.2h0M354.4 215.7h0M354.7 214.4h0M360.9 212.9h0M370.8 211.9h0M374.2 210.7h0M379.8 209.5h0M386.6 208.3h0M389.0 206.9h0M393.5 205.4h0M401.4 204.5h0M405.0 203.9h0M348.7 219.8h0M352.5 218.6h0M359.4 217.3h0M367.4 216.4h0M373.5 214.9h0M378.2 213.8h0M380.5 212.0h0M385.7 211.1h0M394.9 209.8h0M396.7 208.5h0M405.5 207.5h0M409.5 206.3h0M415.5 205.0h0M414.9 204.7h0M361.5 221.0h0M361.5 220.3h0M370.9 219.1h0M374.2 217.6h0M380.8 216.3h0M385.3 215.0h0M392.2 213.9h0M396.4 212.5h0M402.6 211.5h0M406.2 209.7h0M413.1 209.1h0M418.8 207.8h0M424.3 206.1h0M426.1 205.6h0M373.0 222.0h0M377.5 220.9h0M383.2 219.6h0M388.7 218.3h0M393.9 217.0h0M399.1 215.8h0M405.3 214.3h0M410.2 213.2h0M416.7 211.6h0M422.5 210.2h0M426.5 209.3h0M432.6 207.8h0M437.8 206.6h0" stroke="#2a2a9a" stroke-width="1.0" stroke-linecap="round" stroke-opacity="0.8" fill="none"/></g>
<defs><linearGradient id="cg" x1="0" y1="0" x2="0.12" y2="1"><stop offset="0" stop-color="#dedee2"/><stop offset="0.4" stop-color="#d8d8da"/><stop offset="0.55" stop-color="#c0c0c8"/><stop offset="0.8" stop-color="#9898ac"/><stop offset="1" stop-color="#7a7a96"/></linearGradient><clipPath id="cc"><path d="M402,266 Q402,255 409,251.5 L544,269.2 Q552,272 550,284 Q548,298 541,298.5 L418,280.6 Q404,276 402,266Z"/></clipPath></defs>
<path d="M402,266 Q402,255 409,251.5 L544,269.2 Q552,272 550,284 Q548,298 541,298.5 L418,280.6 Q404,276 402,266Z" fill="url(#cg)"/>
<g clip-path="url(#cc)"><path d="M443.5 259.3L448.5 259.8M532.3 285.7L530.2 289.8M543.3 276.1L542.7 282.2M478.7 273.4L480.2 277.0M464.7 276.3L469.1 275.9M499.6 271.1L495.1 273.9M480.0 286.8L486.2 286.7M526.7 293.4L528.8 295.5M444.4 283.4L447.7 284.9M516.1 273.0L520.1 277.4M409.4 272.3L411.5 275.9M446.3 281.7L444.4 283.4M418.4 255.7L425.0 256.6M483.8 272.5L489.4 273.1M463.0 284.0L466.8 286.5M450.6 284.4L452.7 285.6M430.1 271.5L435.5 271.1M504.8 289.3L509.9 290.9M475.0 267.0L481.0 268.7M516.3 294.9L519.9 295.4M420.6 273.2L426.3 274.6M530.2 289.8L536.1 289.8M531.1 267.5L538.2 268.5M518.8 270.0L526.1 270.9M401.7 253.9L401.8 258.2M537.9 271.8L539.5 276.9M429.0 279.1L432.4 281.8M440.1 272.0L443.7 278.0M417.5 259.7L420.0 264.6M487.6 268.8L483.8 272.5M406.5 254.6L410.1 259.6M410.1 259.6L409.3 263.3M528.8 295.5L532.1 297.2M435.5 271.1L440.1 272.0M461.3 286.3L466.8 286.5M477.9 288.2L474.3 288.8M505.5 282.2L502.4 285.9M440.2 283.8L447.7 284.9M467.2 259.3L464.3 259.5M525.3 266.8L528.1 268.2M534.5 269.1L539.8 269.8M542.7 282.2L538.6 286.3M464.7 276.3L461.5 279.4M460.3 258.4L467.2 259.3M465.5 271.2L473.6 271.4M431.0 254.6L428.1 254.8M478.4 282.7L483.7 282.7M522.4 283.9L527.0 284.4M446.3 281.7L450.6 284.4M471.5 281.9L470.8 284.4M518.9 294.2L519.9 295.4M414.6 279.4L411.6 279.6M466.8 286.5L472.6 287.3M442.5 266.8L440.1 272.0M422.0 269.1L426.3 274.6M430.3 265.7L437.4 266.1M493.3 263.3L497.4 266.1M433.0 255.9L431.2 257.7M432.4 281.8L439.2 282.6M409.3 263.3L404.7 266.5M522.4 283.9L525.3 289.5M470.8 284.4L474.9 284.9M504.1 293.1L509.9 294.0M539.8 269.8L543.6 272.9M525.3 279.3L522.4 283.9M404.7 252.1L406.5 254.6M457.8 259.0L461.6 262.4M538.6 286.3L540.9 290.7M534.5 269.1L532.0 270.5M412.9 252.2L410.7 252.9M521.1 292.3L518.9 294.2M455.9 278.6L452.2 282.7M489.4 273.1L487.2 279.7M478.7 264.0L483.5 265.3M513.1 265.2L511.8 265.9M401.7 253.9L406.5 254.6M516.9 282.7L522.4 283.9M507.1 268.4L513.6 268.2M459.0 283.2L463.0 284.0M420.6 273.2L417.8 277.4M423.0 278.0L421.6 280.3M495.5 290.9L491.9 291.3M530.2 289.8L526.7 293.4M531.1 267.5L528.1 268.2M509.5 281.1L516.9 282.7M536.1 289.8L531.9 293.7M425.3 265.7L430.1 271.5M451.8 258.0L448.5 259.8M454.7 257.6L457.8 259.0M508.6 276.0L505.5 282.2M440.4 281.0L444.4 283.4M509.9 290.9L505.9 292.8M461.3 286.3L459.1 286.5M448.1 268.1L451.5 273.7M538.2 268.5L544.0 269.2M432.4 275.3L429.0 279.1M433.0 255.9L440.3 256.7M511.8 265.9L516.3 266.5M467.1 262.3L464.4 266.3M477.9 288.2L481.6 289.8M505.5 282.2L508.0 287.2M481.0 268.7L483.8 272.5M404.4 278.0L407.7 279.0M481.0 268.7L478.7 273.4M443.6 256.2L445.2 257.2M463.0 284.0L470.8 284.4M422.0 269.1L430.1 271.5M472.6 287.3L474.3 288.8M474.9 284.9L472.6 287.3M527.0 284.4L525.3 289.5M401.0 250.7L404.7 252.1M499.6 271.1L500.8 275.9M513.1 276.9L520.1 277.4M410.7 252.9L415.3 253.4M492.2 269.2L489.4 273.1M412.2 268.7L417.2 269.6M447.5 256.7L445.2 257.2M541.1 297.4L541.1 297.5M429.0 279.1L435.1 279.7M536.1 289.8L539.1 294.8M538.6 286.3L536.1 289.8M525.3 279.3L530.1 279.8M489.3 283.0L492.5 287.5M421.9 254.3L428.1 254.8M508.6 276.0L509.5 281.1M468.9 266.2L475.0 267.0M404.0 278.5L407.7 279.0M494.6 284.7L502.4 285.9M417.2 269.6L422.0 269.1M470.5 288.2L474.3 288.8M455.9 278.6L461.5 279.4M500.8 275.9L508.6 276.0M483.5 265.3L487.6 268.8M405.7 258.6L402.3 263.1M490.2 265.9L492.2 269.2M490.3 262.3L496.2 263.0M410.1 259.6L413.0 264.5M527.7 274.6L533.4 275.6M469.1 275.9L467.0 280.3M489.4 273.1L495.1 273.9M430.1 271.5L426.3 274.6M409.4 278.4L414.6 279.4M519.9 266.1L524.2 267.4M498.2 264.5L505.2 264.8M531.9 293.7L539.1 294.8M528.1 268.2L526.1 270.9M539.1 294.8L541.3 295.4M525.3 289.5L526.7 293.4M474.3 288.8L481.6 289.8M458.0 275.1L455.9 278.6M482.4 262.4L487.0 262.4M512.8 293.7L518.9 294.2M412.2 268.7L409.4 272.3M487.0 262.4L493.3 263.3M471.6 262.9L478.7 264.0M492.9 278.6L498.5 280.3M427.6 281.1L432.4 281.8M413.0 264.5L420.0 264.6M467.0 280.3L470.8 284.4M445.8 263.3L442.5 266.8M533.4 275.6L539.5 276.9M426.3 274.6L429.0 279.1M471.5 281.9L478.4 282.7M475.4 278.0L480.2 277.0M414.6 279.4L421.6 280.3M438.8 276.0L440.4 281.0M421.6 280.3L427.6 281.1M433.0 255.9L435.8 258.2M477.9 260.6L474.7 260.9M532.0 270.5L537.9 271.8M418.4 255.7L417.5 259.7M440.3 256.7L443.5 259.3M493.3 263.3L498.2 264.5M487.2 279.7L483.7 282.7M402.3 263.1L404.7 266.5M405.9 275.0L411.5 275.9M403.3 271.6L403.7 275.8M469.1 275.9L471.5 281.9M485.2 261.6L490.3 262.3M531.9 293.7L528.8 295.5M518.8 270.0L516.1 273.0M505.2 264.8L501.3 267.3M439.9 262.7L437.4 266.1M423.0 278.0L429.0 279.1M487.0 262.4L483.5 265.3M496.2 263.0L493.3 263.3M508.0 287.2L512.1 287.5M541.1 297.4L538.9 298.2M492.9 278.6L489.3 283.0M411.5 275.9L417.8 277.4M512.1 287.5L509.9 290.9M407.9 251.6L412.9 252.2M524.2 267.4L528.1 268.2M500.8 291.4L505.9 292.8M445.8 263.3L448.1 268.1M460.3 258.4L457.8 259.0M539.1 294.8L535.2 296.9M502.4 285.9L504.8 289.3M526.0 296.3L532.1 297.2M502.4 285.9L497.9 288.9M423.0 278.0L427.6 281.1M490.6 290.5L495.5 290.9M421.9 254.3L425.0 256.6M503.4 263.9L507.8 264.5M444.4 283.4L440.2 283.8M473.6 271.4L469.1 275.9M509.9 290.9L512.8 293.7M423.8 253.6L431.0 254.6M487.2 279.7L489.3 283.0M532.3 285.7L536.1 289.8M527.7 274.6L530.1 279.8M524.2 267.4L526.1 270.9M435.5 271.1L432.4 275.3M543.6 272.9L543.3 276.1M464.4 266.3L465.5 271.2M409.4 278.4L407.7 279.0M428.1 254.8L433.0 255.9M437.4 266.1L435.5 271.1M467.1 262.3L468.9 266.2M537.9 271.8L533.4 275.6M487.0 262.4L490.2 265.9M412.7 255.0L410.1 259.6M423.8 253.6L421.9 254.3M495.1 273.9L500.8 275.9M497.9 288.9L504.8 289.3M428.1 261.9L430.3 265.7M431.2 257.7L434.8 261.8M512.1 287.5L515.7 290.9M540.9 290.7L541.8 290.5M517.9 288.6L521.1 292.3M480.2 277.0L483.7 282.7M421.6 280.3L418.5 280.6M492.5 287.5L495.5 290.9M403.3 271.6L409.4 272.3M473.6 271.4L475.4 278.0M452.2 282.7L450.6 284.4M513.6 268.2L516.1 273.0M448.5 259.8L454.5 261.3M477.9 260.6L482.4 262.4M510.6 271.4L508.6 276.0M455.9 268.6L458.0 275.1M459.0 283.2L461.3 286.3M460.1 269.9L464.7 276.3M498.5 280.3L494.6 284.7M443.7 278.0L450.2 278.1M425.0 256.6L428.1 261.9M439.2 282.6L444.4 283.4M450.2 278.1L455.9 278.6M480.2 277.0L478.4 282.7M471.5 259.8L474.7 260.9M544.0 269.2L539.8 269.8M420.0 264.6L425.3 265.7M412.7 255.0L417.5 259.7M505.2 264.8L507.1 268.4M483.5 265.3L481.0 268.7M429.0 279.1L427.6 281.1M464.3 259.5L468.6 260.6M524.9 295.1L519.9 295.4M539.8 269.8L537.9 271.8M407.9 251.6L404.7 252.1M454.3 285.3L461.3 286.3M447.7 284.9L452.7 285.6M542.2 286.3L540.9 290.7M486.2 286.7L492.5 287.5M451.5 273.7L458.0 275.1M490.6 290.5L486.1 290.5M535.2 296.9L538.9 298.2M522.9 273.5L520.1 277.4M526.1 270.9L527.7 274.6M440.1 272.0L445.2 272.9M467.0 280.3L463.0 284.0M445.2 272.9L451.5 273.7M543.9 270.4L543.6 272.9M478.7 264.0L481.0 268.7M510.6 271.4L513.1 276.9M478.7 264.0L475.0 267.0M495.5 290.9L500.8 291.4M530.1 279.8L532.3 285.7M498.5 280.3L502.4 285.9M461.5 279.4L467.0 280.3M437.4 266.1L442.5 266.8M451.8 258.0L457.8 259.0M451.5 273.7L455.9 278.6M467.2 259.3L471.5 259.8M501.3 267.3L505.3 271.1M505.9 292.8L504.1 293.1M501.3 267.3L499.6 271.1M418.4 255.7L422.1 261.1M422.1 261.1L420.0 264.6M440.3 256.7L445.2 257.2M483.7 282.7L489.3 283.0M464.3 259.5L461.6 262.4M417.2 269.6L420.6 273.2M431.0 254.6L437.6 255.4M531.1 267.5L534.5 269.1M518.8 270.0L522.9 273.5M532.1 297.2L538.9 298.2M540.9 290.7L539.1 294.8M437.6 255.4L443.6 256.2M457.8 259.0L454.5 261.3M481.0 268.7L487.6 268.8M490.3 262.3L487.0 262.4M442.5 266.8L448.1 268.1M542.7 282.2L542.2 286.3M443.6 256.2L440.3 256.7M472.6 287.3L470.5 288.2M520.1 277.4L516.9 282.7M440.1 272.0L438.8 276.0M425.3 265.7L430.3 265.7M539.1 294.8L541.1 297.4M454.7 257.6L460.3 258.4M427.6 281.1L425.1 281.6M457.9 265.6L464.4 266.3M430.1 271.5L432.4 275.3M484.2 289.2L486.1 290.5M497.4 266.1L492.2 269.2M486.2 286.7L484.2 289.2M475.0 267.0L473.6 271.4M439.2 282.6L436.0 283.2M450.2 278.1L446.3 281.7M524.9 295.1L528.8 295.5M444.4 283.4L450.6 284.4M505.9 292.8L509.9 294.0M420.0 264.6L417.2 269.6M409.4 272.3L414.2 272.3M435.5 271.1L438.8 276.0M425.3 265.7L422.0 269.1M454.7 257.6L451.8 258.0M516.3 266.5L524.2 267.4M468.6 260.6L471.6 262.9M532.0 270.5L527.7 274.6M405.9 275.0L409.4 278.4M526.7 293.4L524.9 295.1M528.8 295.5L535.2 296.9M500.8 275.9L498.5 280.3M528.1 268.2L534.5 269.1M447.5 256.7L451.8 258.0M404.4 278.0L404.0 278.5M536.1 289.8L540.9 290.7M431.2 257.7L428.1 261.9M516.9 282.7L512.1 287.5M435.1 279.7L440.4 281.0M508.6 276.0L513.1 276.9M401.1 251.6L404.7 252.1M428.1 254.8L425.0 256.6M497.4 266.1L499.6 271.1M461.5 279.4L459.0 283.2M461.6 262.4L467.1 262.3M505.5 282.2L509.5 281.1M516.3 266.5L513.6 268.2M525.3 266.8L524.2 267.4M537.1 280.1L538.6 286.3M402.7 266.1L403.3 271.6M437.6 255.4L433.0 255.9M474.7 260.9L482.4 262.4M505.2 264.8L511.8 265.9M520.1 277.4L525.3 279.3M415.3 253.4L421.9 254.3M410.7 252.9L406.5 254.6M457.9 265.6L460.1 269.9M516.9 282.7L517.9 288.6M492.2 269.2L495.1 273.9M507.8 264.5L505.2 264.8M409.4 272.3L405.9 275.0M463.0 284.0L461.3 286.3M535.2 296.9L532.1 297.2M450.8 263.6L448.1 268.1M516.3 266.5L518.8 270.0M443.5 259.3L439.9 262.7M521.1 292.3L526.7 293.4M412.9 252.2L419.6 253.1M409.3 263.3L412.2 268.7M445.2 272.9L443.7 278.0M419.6 253.1L423.8 253.6M448.5 259.8L445.8 263.3M528.8 295.5L526.0 296.3M483.8 272.5L480.2 277.0M504.8 289.3L505.9 292.8M464.4 266.3L468.9 266.2M528.1 268.2L532.0 270.5M504.8 289.3L500.8 291.4M448.1 268.1L455.9 268.6M435.8 258.2L439.9 262.7M513.1 265.2L519.9 266.1M534.5 269.1L537.9 271.8M417.2 269.6L414.2 272.3M455.9 278.6L459.0 283.2M500.8 275.9L505.5 282.2M454.3 285.3L452.7 285.6M414.2 272.3L411.5 275.9M477.9 288.2L484.2 289.2M521.1 292.3L524.9 295.1M452.2 282.7L459.0 283.2M428.1 261.9L434.8 261.8M404.7 266.5L403.3 271.6M404.4 278.0L409.4 278.4M489.4 273.1L492.9 278.6M525.3 266.8L531.1 267.5M515.7 290.9L521.1 292.3M454.5 261.3L457.9 265.6M470.8 284.4L466.8 286.5M507.8 264.5L511.8 265.9M533.4 275.6L530.1 279.8M440.4 281.0L446.3 281.7M402.7 266.1L404.7 266.5M499.6 271.1L505.3 271.1M486.2 286.7L490.6 290.5M401.0 250.7L407.9 251.6M475.0 267.0L478.7 273.4M420.6 273.2L423.0 278.0M432.4 275.3L438.8 276.0M469.1 275.9L475.4 278.0M530.2 289.8L531.9 293.7M543.6 272.9L543.6 273.3M518.9 294.2L524.9 295.1M467.1 262.3L471.6 262.9M451.8 258.0L454.5 261.3M493.3 263.3L490.2 265.9M403.3 271.6L405.9 275.0M417.8 277.4L423.0 278.0M513.6 268.2L510.6 271.4M489.3 283.0L494.6 284.7M445.2 272.9L450.2 278.1M483.8 272.5L487.2 279.7M461.3 286.3L464.6 287.3M519.9 266.1L525.3 266.8M474.9 284.9L480.0 286.8M401.0 250.7L401.1 251.6M527.0 284.4L532.3 285.7M539.5 276.9L543.3 276.1M431.2 257.7L435.8 258.2M415.3 253.4L418.4 255.7M468.6 260.6L467.1 262.3M468.6 260.6L474.7 260.9M532.0 270.5L533.4 275.6M512.1 287.5L517.9 288.6M471.5 259.8L468.6 260.6M478.7 273.4L483.8 272.5M498.2 264.5L497.4 266.1M414.2 272.3L417.8 277.4M417.5 259.7L422.1 261.1M404.7 252.1L401.7 253.9M482.4 262.4L478.7 264.0M485.2 261.6L487.0 262.4M470.8 284.4L472.6 287.3M541.1 297.4L541.0 298.5M509.9 290.9L515.7 290.9M466.8 286.5L470.5 288.2M459.1 286.5L464.6 287.3M477.9 260.6L485.2 261.6M455.9 268.6L460.1 269.9M522.9 273.5L527.7 274.6M425.0 256.6L431.2 257.7M405.7 258.6L410.1 259.6M537.9 271.8L543.6 272.9M467.0 280.3L471.5 281.9M432.4 281.8L436.0 283.2M478.4 282.7L480.0 286.8M435.1 279.7L432.4 281.8M406.5 254.6L412.7 255.0M464.7 276.3L467.0 280.3M510.6 271.4L516.1 273.0M478.4 282.7L474.9 284.9M519.9 295.4L526.0 296.3M448.1 268.1L445.2 272.9M537.1 280.1L532.3 285.7M458.0 275.1L464.7 276.3M538.9 298.2L541.0 298.5M422.1 261.1L428.1 261.9M455.9 268.6L451.5 273.7M505.9 292.8L512.8 293.7M464.6 287.3L470.5 288.2M498.2 264.5L501.3 267.3M425.0 256.6L422.1 261.1M410.1 259.6L417.5 259.7M538.2 268.5L534.5 269.1M429.6 282.2L436.0 283.2M526.1 270.9L532.0 270.5M422.1 261.1L425.3 265.7M497.9 288.9L500.8 291.4M530.1 279.8L537.1 280.1M472.6 287.3L477.9 288.2M518.9 294.2L516.3 294.9M489.3 283.0L486.2 286.7M443.5 259.3L445.8 263.3M435.1 279.7L439.2 282.6M422.0 269.1L420.6 273.2M494.6 284.7L492.5 287.5M484.2 289.2L481.6 289.8M513.1 276.9L509.5 281.1M401.7 253.9L405.7 258.6M526.1 270.9L522.9 273.5M527.0 284.4L530.2 289.8M539.5 276.9L542.7 282.2M465.5 271.2L464.7 276.3M412.2 268.7L414.2 272.3M401.1 251.6L401.7 253.9M461.6 262.4L457.9 265.6M496.2 263.0L503.4 263.9M505.3 271.1L508.6 276.0M524.9 295.1L526.0 296.3M505.3 271.1L500.8 275.9M490.2 265.9L487.6 268.8M430.3 265.7L430.1 271.5M439.9 262.7L442.5 266.8M538.2 268.5L539.8 269.8M482.4 262.4L483.5 265.3M500.8 291.4L497.8 292.2M445.2 257.2L451.8 258.0M473.6 271.4L478.7 273.4M405.7 258.6L409.3 263.3M532.3 285.7L538.6 286.3M531.9 293.7L535.2 296.9M517.9 288.6L525.3 289.5M460.3 258.4L464.3 259.5M494.6 284.7L497.9 288.9M458.0 275.1L461.5 279.4M465.5 271.2L469.1 275.9M411.5 275.9L409.4 278.4M515.7 290.9L512.8 293.7M443.7 278.0L440.4 281.0M471.5 259.8L477.9 260.6M428.1 261.9L425.3 265.7M412.7 255.0L418.4 255.7M440.3 256.7L435.8 258.2M450.6 284.4L454.3 285.3M525.3 279.3L527.0 284.4M438.8 276.0L443.7 278.0M430.3 265.7L435.5 271.1M443.6 256.2L447.5 256.7M409.4 278.4L411.6 279.6M464.3 259.5L467.1 262.3M437.4 266.1L440.1 272.0M475.4 278.0L471.5 281.9M447.5 256.7L454.7 257.6M497.8 292.2L504.1 293.1M467.2 259.3L468.6 260.6M487.6 268.8L492.2 269.2M417.8 277.4L414.6 279.4M415.3 253.4L412.7 255.0M512.8 293.7L516.3 294.9M419.6 253.1L415.3 253.4M492.5 287.5L497.9 288.9M481.6 289.8L486.1 290.5M445.2 257.2L443.5 259.3M483.7 282.7L486.2 286.7M486.1 290.5L491.9 291.3M497.4 266.1L501.3 267.3M405.9 275.0L404.4 278.0M509.9 294.0L516.3 294.9M427.6 281.1L429.6 282.2M437.6 255.4L440.3 256.7M471.5 281.9L474.9 284.9M541.3 295.4L541.1 297.4M520.1 277.4L522.4 283.9M498.5 280.3L505.5 282.2M522.4 283.9L517.9 288.6M414.6 279.4L418.5 280.6M442.5 266.8L445.2 272.9M537.1 280.1L542.7 282.2M421.6 280.3L425.1 281.6M480.2 277.0L487.2 279.7M492.2 269.2L499.6 271.1M407.7 279.0L411.6 279.6M508.0 287.2L504.8 289.3M501.3 267.3L507.1 268.4M515.7 290.9L518.9 294.2M450.8 263.6L457.9 265.6M450.2 278.1L452.2 282.7M452.2 282.7L454.3 285.3M483.5 265.3L490.2 265.9M535.2 296.9L541.1 297.4M502.4 285.9L508.0 287.2M490.2 265.9L497.4 266.1M507.1 268.4L510.6 271.4M524.2 267.4L518.8 270.0M543.6 272.9L539.5 276.9M464.4 266.3L460.1 269.9M425.1 281.6L429.6 282.2M475.4 278.0L478.4 282.7M404.7 266.5L412.2 268.7M417.8 277.4L421.6 280.3M525.3 289.5L530.2 289.8M544.0 269.2L543.9 270.4M511.8 265.9L507.1 268.4M411.6 279.6L418.5 280.6M450.8 263.6L455.9 268.6M445.2 257.2L448.5 259.8M418.5 280.6L425.1 281.6M519.9 266.1L516.3 266.5M500.8 291.4L504.1 293.1M446.3 281.7L452.2 282.7M428.1 254.8L431.2 257.7M517.9 288.6L515.7 290.9M414.2 272.3L420.6 273.2M426.3 274.6L432.4 275.3M525.3 289.5L521.1 292.3M490.6 290.5L491.9 291.3M495.5 290.9L497.8 292.2M495.1 273.9L492.9 278.6M461.5 279.4L463.0 284.0M497.9 288.9L495.5 290.9M509.5 281.1L512.1 287.5M522.9 273.5L525.3 279.3M450.6 284.4L447.7 284.9M513.1 276.9L516.9 282.7M402.3 263.1L409.3 263.3M407.9 251.6L410.7 252.9M516.1 273.0L513.1 276.9M409.3 263.3L413.0 264.5M445.8 263.3L450.8 263.6M438.8 276.0L435.1 279.7M468.9 266.2L465.5 271.2M426.3 274.6L423.0 278.0M460.1 269.9L458.0 275.1M471.6 262.9L468.9 266.2M480.0 286.8L484.2 289.2M492.9 278.6L494.6 284.7M487.6 268.8L489.4 273.1M539.5 276.9L537.1 280.1M413.0 264.5L412.2 268.7M480.0 286.8L477.9 288.2M461.6 262.4L464.4 266.3M503.4 263.9L498.2 264.5M511.8 265.9L513.6 268.2M406.5 254.6L405.7 258.6M487.2 279.7L492.9 278.6M402.3 263.1L402.7 266.1M435.8 258.2L434.8 261.8M491.9 291.3L497.8 292.2M434.8 261.8L439.9 262.7M507.8 264.5L513.1 265.2M540.9 290.7L541.3 295.4M404.7 252.1L410.7 252.9M490.3 262.3L493.3 263.3M410.7 252.9L412.7 255.0M485.2 261.6L482.4 262.4M478.7 273.4L475.4 278.0M495.1 273.9L498.5 280.3M466.8 286.5L464.6 287.3M454.5 261.3L450.8 263.6M421.9 254.3L418.4 255.7M468.9 266.2L473.6 271.4M443.7 278.0L446.3 281.7M530.1 279.8L527.0 284.4M471.6 262.9L475.0 267.0M526.7 293.4L531.9 293.7M439.2 282.6L440.2 283.8M411.5 275.9L414.6 279.4M404.7 266.5L409.4 272.3M413.0 264.5L417.2 269.6M451.5 273.7L450.2 278.1M432.4 281.8L429.6 282.2M516.1 273.0L522.9 273.5M420.0 264.6L422.0 269.1M474.7 260.9L471.6 262.9M448.5 259.8L450.8 263.6M527.7 274.6L525.3 279.3M434.8 261.8L430.3 265.7M454.3 285.3L459.1 286.5M509.5 281.1L508.0 287.2M412.9 252.2L415.3 253.4M419.6 253.1L421.9 254.3M512.8 293.7L509.9 294.0M483.7 282.7L480.0 286.8M436.0 283.2L440.2 283.8M403.7 275.8L405.9 275.0M513.1 265.2L516.3 266.5M513.6 268.2L518.8 270.0M533.4 275.6L537.1 280.1M542.7 282.2L542.7 281.6M492.5 287.5L490.6 290.5M508.0 287.2L509.9 290.9M460.1 269.9L465.5 271.2M452.7 285.6L459.1 286.5M401.8 258.2L405.7 258.6M403.7 275.8L404.4 278.0M440.4 281.0L439.2 282.6M484.2 289.2L490.6 290.5M474.7 260.9L478.7 264.0M435.8 258.2L443.5 259.3M432.4 275.3L435.1 279.7M507.1 268.4L505.3 271.1M457.9 265.6L455.9 268.6M431.0 254.6L433.0 255.9M503.4 263.9L505.2 264.8M434.8 261.8L437.4 266.1M459.0 283.2L454.3 285.3M423.8 253.6L428.1 254.8M417.5 259.7L413.0 264.5M505.3 271.1L510.6 271.4M496.2 263.0L498.2 264.5M401.8 258.2L402.3 263.1M454.5 261.3L461.6 262.4M439.9 262.7L445.8 263.3M539.8 269.8L543.9 270.4M474.9 284.9L477.9 288.2M457.8 259.0L464.3 259.5M538.6 286.3L542.2 286.3" stroke="#34347e" stroke-width="0.4" stroke-opacity="0.75" fill="none"/><path d="M401.0 250.7h0M407.9 251.6h0M412.9 252.2h0M419.6 253.1h0M423.8 253.6h0M431.0 254.6h0M437.6 255.4h0M443.6 256.2h0M447.5 256.7h0M454.7 257.6h0M460.3 258.4h0M467.2 259.3h0M471.5 259.8h0M477.9 260.6h0M485.2 261.6h0M490.3 262.3h0M496.2 263.0h0M503.4 263.9h0M507.8 264.5h0M513.1 265.2h0M519.9 266.1h0M525.3 266.8h0M531.1 267.5h0M538.2 268.5h0M544.0 269.2h0M401.1 251.6h0M404.7 252.1h0M410.7 252.9h0M415.3 253.4h0M421.9 254.3h0M428.1 254.8h0M433.0 255.9h0M440.3 256.7h0M445.2 257.2h0M451.8 258.0h0M457.8 259.0h0M464.3 259.5h0M468.6 260.6h0M474.7 260.9h0M482.4 262.4h0M487.0 262.4h0M493.3 263.3h0M498.2 264.5h0M505.2 264.8h0M511.8 265.9h0M516.3 266.5h0M524.2 267.4h0M528.1 268.2h0M534.5 269.1h0M539.8 269.8h0M543.9 270.4h0M401.7 253.9h0M406.5 254.6h0M412.7 255.0h0M418.4 255.7h0M425.0 256.6h0M431.2 257.7h0M435.8 258.2h0M443.5 259.3h0M448.5 259.8h0M454.5 261.3h0M461.6 262.4h0M467.1 262.3h0M471.6 262.9h0M478.7 264.0h0M483.5 265.3h0M490.2 265.9h0M497.4 266.1h0M501.3 267.3h0M507.1 268.4h0M513.6 268.2h0M518.8 270.0h0M526.1 270.9h0M532.0 270.5h0M537.9 271.8h0M543.6 272.9h0M543.6 273.3h0M401.8 258.2h0M405.7 258.6h0M410.1 259.6h0M417.5 259.7h0M422.1 261.1h0M428.1 261.9h0M434.8 261.8h0M439.9 262.7h0M445.8 263.3h0M450.8 263.6h0M457.9 265.6h0M464.4 266.3h0M468.9 266.2h0M475.0 267.0h0M481.0 268.7h0M487.6 268.8h0M492.2 269.2h0M499.6 271.1h0M505.3 271.1h0M510.6 271.4h0M516.1 273.0h0M522.9 273.5h0M527.7 274.6h0M533.4 275.6h0M539.5 276.9h0M543.3 276.1h0M402.3 263.1h0M409.3 263.3h0M413.0 264.5h0M420.0 264.6h0M425.3 265.7h0M430.3 265.7h0M437.4 266.1h0M442.5 266.8h0M448.1 268.1h0M455.9 268.6h0M460.1 269.9h0M465.5 271.2h0M473.6 271.4h0M478.7 273.4h0M483.8 272.5h0M489.4 273.1h0M495.1 273.9h0M500.8 275.9h0M508.6 276.0h0M513.1 276.9h0M520.1 277.4h0M525.3 279.3h0M530.1 279.8h0M537.1 280.1h0M542.7 282.2h0M542.7 281.6h0M402.7 266.1h0M404.7 266.5h0M412.2 268.7h0M417.2 269.6h0M422.0 269.1h0M430.1 271.5h0M435.5 271.1h0M440.1 272.0h0M445.2 272.9h0M451.5 273.7h0M458.0 275.1h0M464.7 276.3h0M469.1 275.9h0M475.4 278.0h0M480.2 277.0h0M487.2 279.7h0M492.9 278.6h0M498.5 280.3h0M505.5 282.2h0M509.5 281.1h0M516.9 282.7h0M522.4 283.9h0M527.0 284.4h0M532.3 285.7h0M538.6 286.3h0M542.2 286.3h0M403.3 271.6h0M409.4 272.3h0M414.2 272.3h0M420.6 273.2h0M426.3 274.6h0M432.4 275.3h0M438.8 276.0h0M443.7 278.0h0M450.2 278.1h0M455.9 278.6h0M461.5 279.4h0M467.0 280.3h0M471.5 281.9h0M478.4 282.7h0M483.7 282.7h0M489.3 283.0h0M494.6 284.7h0M502.4 285.9h0M508.0 287.2h0M512.1 287.5h0M517.9 288.6h0M525.3 289.5h0M530.2 289.8h0M536.1 289.8h0M540.9 290.7h0M541.8 290.5h0M403.7 275.8h0M405.9 275.0h0M411.5 275.9h0M417.8 277.4h0M423.0 278.0h0M429.0 279.1h0M435.1 279.7h0M440.4 281.0h0M446.3 281.7h0M452.2 282.7h0M459.0 283.2h0M463.0 284.0h0M470.8 284.4h0M474.9 284.9h0M480.0 286.8h0M486.2 286.7h0M492.5 287.5h0M497.9 288.9h0M504.8 289.3h0M509.9 290.9h0M515.7 290.9h0M521.1 292.3h0M526.7 293.4h0M531.9 293.7h0M539.1 294.8h0M541.3 295.4h0M404.4 278.0h0M409.4 278.4h0M414.6 279.4h0M421.6 280.3h0M427.6 281.1h0M432.4 281.8h0M439.2 282.6h0M444.4 283.4h0M450.6 284.4h0M454.3 285.3h0M461.3 286.3h0M466.8 286.5h0M472.6 287.3h0M477.9 288.2h0M484.2 289.2h0M490.6 290.5h0M495.5 290.9h0M500.8 291.4h0M505.9 292.8h0M512.8 293.7h0M518.9 294.2h0M524.9 295.1h0M528.8 295.5h0M535.2 296.9h0M541.1 297.4h0M541.1 297.5h0M404.0 278.5h0M407.7 279.0h0M411.6 279.6h0M418.5 280.6h0M425.1 281.6h0M429.6 282.2h0M436.0 283.2h0M440.2 283.8h0M447.7 284.9h0M452.7 285.6h0M459.1 286.5h0M464.6 287.3h0M470.5 288.2h0M474.3 288.8h0M481.6 289.8h0M486.1 290.5h0M491.9 291.3h0M497.8 292.2h0M504.1 293.1h0M509.9 294.0h0M516.3 294.9h0M519.9 295.4h0M526.0 296.3h0M532.1 297.2h0M538.9 298.2h0M541.0 298.5h0" stroke="#2a2a9a" stroke-width="1.0" stroke-linecap="round" stroke-opacity="0.8" fill="none"/></g>
<g clip-path="url(#cc)"><ellipse cx="545" cy="284" rx="5" ry="14.5" transform="rotate(-8 545 284)" fill="#c2c2cc"/><path d="M550.0 283.3L547.7 285.9L550.2 291.9M547.7 285.9L547.3 289.6M550.2 291.9L547.3 289.6L548.4 297.4M547.3 289.6L546.0 291.2M548.4 297.4L546.0 291.2L545.4 297.9M546.0 291.2L544.4 290.0M545.4 297.9L544.4 290.0L542.2 293.0M544.4 290.0L543.0 286.5M542.2 293.0L543.0 286.5L540.0 284.7M543.0 286.5L542.3 282.1M540.0 284.7L542.3 282.1L539.8 276.1M542.3 282.1L542.7 278.4M539.8 276.1L542.7 278.4L541.6 270.6M542.7 278.4L544.0 276.8M541.6 270.6L544.0 276.8L544.6 270.1M544.0 276.8L545.6 278.0M544.6 270.1L545.6 278.0L547.8 275.0M545.6 278.0L547.0 281.5M547.8 275.0L547.0 281.5L550.0 283.3M547.0 281.5L547.7 285.9" stroke="#34347e" stroke-width="0.4" fill="none" stroke-opacity="0.8"/><path d="M550.0 283.3h0M550.2 291.9h0M548.4 297.4h0M545.4 297.9h0M542.2 293.0h0M540.0 284.7h0M539.8 276.1h0M541.6 270.6h0M544.6 270.1h0M547.8 275.0h0M547.7 285.9h0M547.3 289.6h0M546.0 291.2h0M544.4 290.0h0M543.0 286.5h0M542.3 282.1h0M542.7 278.4h0M544.0 276.8h0M545.6 278.0h0M547.0 281.5h0" stroke="#2a2a9a" stroke-width="1" stroke-linecap="round" stroke-opacity="0.8" fill="none"/></g>
</svg>

<!-- status bar -->
<!--EDGE-->
<div class="a" style="left:0;top:417px;width:690px;height:14px;background:#323232;border-top:1px solid #454545"></div>
<div class="a" style="left:229px;top:418px;width:12px;height:13px;background:#3a3a3a"></div>
<div class="a" style="left:233.3px;top:421.5px;width:3.4px;height:3.4px;border-radius:50%;background:#b02a40"></div>
<div class="a" style="left:241px;top:418px;width:220px;height:13px;background:#232323;border-top:1px solid #8a8a8a;border-left:1px solid #8a8a8a"></div>
<div class="a" style="left:461px;top:419px;width:126px;height:10px;background:#c7eec7;border:0.5px solid #9ab89a"></div>
<div class="a" style="left:461px;top:418.3px;width:124px;text-align:right;font-size:6.8px;line-height:11px;color:#1a1a1a;letter-spacing:-0.11px">Sterphanes-MacBook-Pro.local</div>
<div class="a" style="left:587px;top:417px;width:103px;height:14px;background:#1e1e1e"></div>
<div class="a" style="left:589px;top:418.3px;font-size:6.8px;line-height:11px;color:#eeeeee;letter-spacing:-0.11px">4.4 GiB/8.0 GiB 55.0%</div>
<div class="a" style="left:0;top:429.5px;width:4px;height:2px;background:#3a2020"></div>
<div class="a" style="left:688px;top:24px;width:1px;height:407px;background:#505050"></div>
<div class="a" style="left:689px;top:24px;width:1px;height:407px;background:#1c1c1c"></div>
</body></html>
